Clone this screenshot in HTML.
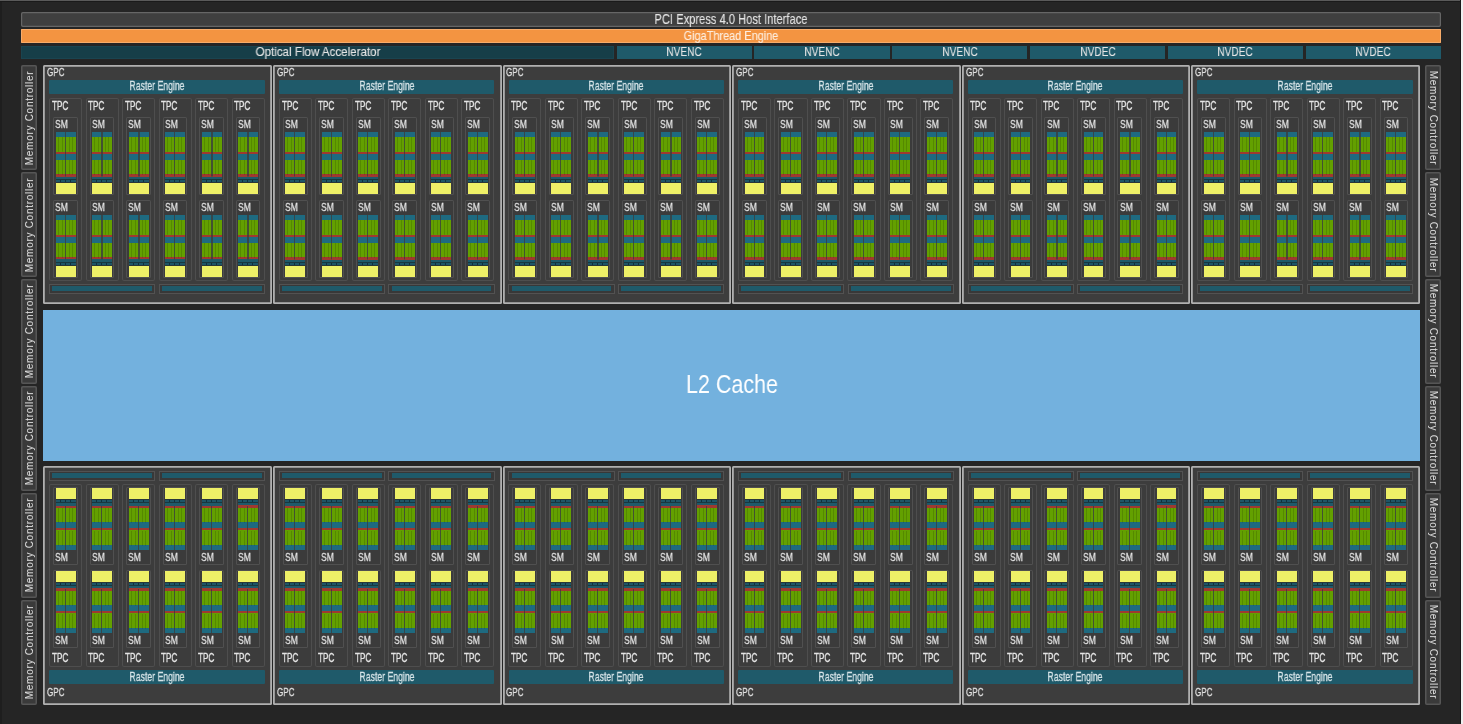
<!DOCTYPE html><html><head><meta charset="utf-8"><style>
html,body{margin:0;padding:0;}
body{width:1463px;height:724px;position:relative;overflow:hidden;background:#252525;font-family:"Liberation Sans", sans-serif;}
#w{position:absolute;left:0;top:0;width:1463px;height:724px;background:#252525;filter:blur(0.45px);}
.r{position:absolute;box-sizing:border-box;}
.t{position:absolute;line-height:1;white-space:nowrap;will-change:transform;}
.mc{text-align:center;color:#dcdcdc;}
.t{-webkit-text-stroke:0.3px currentColor;}
.L{-webkit-text-stroke:0;}
.m{-webkit-text-stroke:0.12px currentColor;}
.s{background:linear-gradient(90deg,transparent 9.3px,rgba(58,62,62,.8) 9.3px,rgba(58,62,62,.8) 10.5px,transparent 10.5px) 0 0/100% 44.5px no-repeat,linear-gradient(90deg,transparent 2.3px,rgba(0,0,0,.14) 2.3px,rgba(0,0,0,.14) 3.1px,transparent 3.1px,transparent 5.8px,rgba(0,0,0,.14) 5.8px,rgba(0,0,0,.14) 6.6px,transparent 6.6px,transparent 12.9px,rgba(0,0,0,.14) 12.9px,rgba(0,0,0,.14) 13.7px,transparent 13.7px,transparent 16.2px,rgba(0,0,0,.14) 16.2px,rgba(0,0,0,.14) 17.0px,transparent 17.0px) 0 5px/100% 14.7px no-repeat,linear-gradient(90deg,transparent 2.3px,rgba(0,0,0,.14) 2.3px,rgba(0,0,0,.14) 3.1px,transparent 3.1px,transparent 5.8px,rgba(0,0,0,.14) 5.8px,rgba(0,0,0,.14) 6.6px,transparent 6.6px,transparent 12.9px,rgba(0,0,0,.14) 12.9px,rgba(0,0,0,.14) 13.7px,transparent 13.7px,transparent 16.2px,rgba(0,0,0,.14) 16.2px,rgba(0,0,0,.14) 17.0px,transparent 17.0px) 0 27.7px/100% 14.7px no-repeat,linear-gradient(90deg,transparent 4.3px,#10303c 4.3px,#10303c 5.3px,transparent 5.3px,transparent 9.3px,#10303c 9.3px,#10303c 10.3px,transparent 10.3px,transparent 14.3px,#10303c 14.3px,#10303c 15.3px,transparent 15.3px) 0 48px/100% 2.3px no-repeat,linear-gradient(180deg,#1e6a80 0,#1e6a80 5px,#63a000 5px,#63a000 19.7px,#a0392f 19.7px,#a0392f 22px,#1e6a80 22px,#1e6a80 27.7px,#63a000 27.7px,#63a000 42.4px,#a0392f 42.4px,#a0392f 44.5px,#1e5a6a 44.5px,#1e5a6a 47.2px,#183840 47.2px,#183840 48px,#1e5566 48px,#1e5566 50.3px,#28363a 50.3px,#28363a 51.1px,#eef067 51.1px,#eef067 62.1px) 0 0/100% 100% no-repeat}
.sf{background:linear-gradient(90deg,transparent 9.3px,rgba(58,62,62,.8) 9.3px,rgba(58,62,62,.8) 10.5px,transparent 10.5px) 0 17.6px/100% 44.5px no-repeat,linear-gradient(90deg,transparent 2.3px,rgba(0,0,0,.14) 2.3px,rgba(0,0,0,.14) 3.1px,transparent 3.1px,transparent 5.8px,rgba(0,0,0,.14) 5.8px,rgba(0,0,0,.14) 6.6px,transparent 6.6px,transparent 12.9px,rgba(0,0,0,.14) 12.9px,rgba(0,0,0,.14) 13.7px,transparent 13.7px,transparent 16.2px,rgba(0,0,0,.14) 16.2px,rgba(0,0,0,.14) 17.0px,transparent 17.0px) 0 42.4px/100% 14.7px no-repeat,linear-gradient(90deg,transparent 2.3px,rgba(0,0,0,.14) 2.3px,rgba(0,0,0,.14) 3.1px,transparent 3.1px,transparent 5.8px,rgba(0,0,0,.14) 5.8px,rgba(0,0,0,.14) 6.6px,transparent 6.6px,transparent 12.9px,rgba(0,0,0,.14) 12.9px,rgba(0,0,0,.14) 13.7px,transparent 13.7px,transparent 16.2px,rgba(0,0,0,.14) 16.2px,rgba(0,0,0,.14) 17.0px,transparent 17.0px) 0 19.7px/100% 14.7px no-repeat,linear-gradient(90deg,transparent 4.3px,#10303c 4.3px,#10303c 5.3px,transparent 5.3px,transparent 9.3px,#10303c 9.3px,#10303c 10.3px,transparent 10.3px,transparent 14.3px,#10303c 14.3px,#10303c 15.3px,transparent 15.3px) 0 11.8px/100% 2.3px no-repeat,linear-gradient(0deg,#1e6a80 0,#1e6a80 5px,#63a000 5px,#63a000 19.7px,#a0392f 19.7px,#a0392f 22px,#1e6a80 22px,#1e6a80 27.7px,#63a000 27.7px,#63a000 42.4px,#a0392f 42.4px,#a0392f 44.5px,#1e5a6a 44.5px,#1e5a6a 47.2px,#183840 47.2px,#183840 48px,#1e5566 48px,#1e5566 50.3px,#28363a 50.3px,#28363a 51.1px,#eef067 51.1px,#eef067 62.1px) 0 0/100% 100% no-repeat}
</style></head><body><div id="w"><div class="r" style="left:0.00px;top:0.00px;width:1463.00px;height:1.30px;background:#5a5a5a"></div><div class="r" style="left:0.00px;top:1.30px;width:1463.00px;height:0.90px;background:#1a1a1a"></div><div class="r" style="left:0.00px;top:2.00px;width:1.60px;height:722.00px;background:#1e1e1e"></div><div class="r" style="left:1459.50px;top:0.00px;width:1.30px;height:724.00px;background:#1a1a1a"></div><div class="r" style="left:1460.80px;top:0.00px;width:2.20px;height:724.00px;background:#f0f0f0"></div><div class="r" style="left:21.00px;top:12.00px;width:1420.00px;height:14.60px;background:#3f3f3f;box-shadow:inset 0 0 0 1.2px #666;border-radius:2px"></div><div class="t m" style="left:531.00px;top:12.00px;width:400px;font-size:14.2px;color:#e4e4e4;text-align:center;transform:scaleX(0.785);">PCI Express 4.0 Host Interface</div><div class="r" style="left:21.00px;top:28.50px;width:1420.00px;height:14.10px;background:#f39441;box-shadow:inset 0 0 0 1px #f8ac6a;border-radius:1px"></div><div class="t m" style="left:531.00px;top:29.00px;width:400px;font-size:13.2px;color:#fdeedf;text-align:center;transform:scaleX(0.828);">GigaThread Engine</div><div class="r" style="left:21.00px;top:45.50px;width:592.50px;height:13.00px;background:#163e48;box-shadow:inset 0 0 0 1px #1a4450"></div><div class="t m" style="left:117.50px;top:46.00px;width:400px;font-size:12.8px;color:#e4e4e4;text-align:center;transform:scaleX(0.905);">Optical Flow Accelerator</div><div class="r" style="left:616.50px;top:45.50px;width:135.40px;height:13.00px;background:#1f5a6a"></div><div class="t m" style="left:484.20px;top:45.00px;width:400px;font-size:13.2px;color:#e4e4e4;text-align:center;transform:scaleX(0.77);">NVENC</div><div class="r" style="left:754.30px;top:45.50px;width:135.40px;height:13.00px;background:#1f5a6a"></div><div class="t m" style="left:622.00px;top:45.00px;width:400px;font-size:13.2px;color:#e4e4e4;text-align:center;transform:scaleX(0.77);">NVENC</div><div class="r" style="left:892.10px;top:45.50px;width:135.40px;height:13.00px;background:#1f5a6a"></div><div class="t m" style="left:759.80px;top:45.00px;width:400px;font-size:13.2px;color:#e4e4e4;text-align:center;transform:scaleX(0.77);">NVENC</div><div class="r" style="left:1029.90px;top:45.50px;width:135.40px;height:13.00px;background:#1f5a6a"></div><div class="t m" style="left:897.60px;top:45.00px;width:400px;font-size:13.2px;color:#e4e4e4;text-align:center;transform:scaleX(0.77);">NVDEC</div><div class="r" style="left:1167.70px;top:45.50px;width:135.40px;height:13.00px;background:#1f5a6a"></div><div class="t m" style="left:1035.40px;top:45.00px;width:400px;font-size:13.2px;color:#e4e4e4;text-align:center;transform:scaleX(0.77);">NVDEC</div><div class="r" style="left:1305.50px;top:45.50px;width:135.40px;height:13.00px;background:#1f5a6a"></div><div class="t m" style="left:1173.20px;top:45.00px;width:400px;font-size:13.2px;color:#e4e4e4;text-align:center;transform:scaleX(0.77);">NVDEC</div><div class="r" style="left:20.90px;top:65.00px;width:16.20px;height:105.20px;background:#3a3a3a;box-shadow:inset 0 0 0 1.5px #565656;border-radius:2px"></div><div class="t mc" style="left:-25.48px;top:112.60px;width:110px;font-size:10px;letter-spacing:0.72px;-webkit-text-stroke:0.05px currentColor;transform:rotate(-90deg)">Memory Controller</div><div class="r" style="left:20.90px;top:171.94px;width:16.20px;height:105.20px;background:#3a3a3a;box-shadow:inset 0 0 0 1.5px #565656;border-radius:2px"></div><div class="t mc" style="left:-25.48px;top:219.54px;width:110px;font-size:10px;letter-spacing:0.72px;-webkit-text-stroke:0.05px currentColor;transform:rotate(-90deg)">Memory Controller</div><div class="r" style="left:20.90px;top:278.88px;width:16.20px;height:105.20px;background:#3a3a3a;box-shadow:inset 0 0 0 1.5px #565656;border-radius:2px"></div><div class="t mc" style="left:-25.48px;top:326.48px;width:110px;font-size:10px;letter-spacing:0.72px;-webkit-text-stroke:0.05px currentColor;transform:rotate(-90deg)">Memory Controller</div><div class="r" style="left:20.90px;top:385.82px;width:16.20px;height:105.20px;background:#3a3a3a;box-shadow:inset 0 0 0 1.5px #565656;border-radius:2px"></div><div class="t mc" style="left:-25.48px;top:433.42px;width:110px;font-size:10px;letter-spacing:0.72px;-webkit-text-stroke:0.05px currentColor;transform:rotate(-90deg)">Memory Controller</div><div class="r" style="left:20.90px;top:492.76px;width:16.20px;height:105.20px;background:#3a3a3a;box-shadow:inset 0 0 0 1.5px #565656;border-radius:2px"></div><div class="t mc" style="left:-25.48px;top:540.36px;width:110px;font-size:10px;letter-spacing:0.72px;-webkit-text-stroke:0.05px currentColor;transform:rotate(-90deg)">Memory Controller</div><div class="r" style="left:20.90px;top:599.70px;width:16.20px;height:105.20px;background:#3a3a3a;box-shadow:inset 0 0 0 1.5px #565656;border-radius:2px"></div><div class="t mc" style="left:-25.48px;top:647.30px;width:110px;font-size:10px;letter-spacing:0.72px;-webkit-text-stroke:0.05px currentColor;transform:rotate(-90deg)">Memory Controller</div><div class="r" style="left:1424.90px;top:65.00px;width:16.20px;height:105.20px;background:#3a3a3a;box-shadow:inset 0 0 0 1.5px #565656;border-radius:2px"></div><div class="t mc" style="left:1378.18px;top:112.60px;width:110px;font-size:10px;letter-spacing:0.72px;-webkit-text-stroke:0.05px currentColor;transform:rotate(90deg)">Memory Controller</div><div class="r" style="left:1424.90px;top:171.94px;width:16.20px;height:105.20px;background:#3a3a3a;box-shadow:inset 0 0 0 1.5px #565656;border-radius:2px"></div><div class="t mc" style="left:1378.18px;top:219.54px;width:110px;font-size:10px;letter-spacing:0.72px;-webkit-text-stroke:0.05px currentColor;transform:rotate(90deg)">Memory Controller</div><div class="r" style="left:1424.90px;top:278.88px;width:16.20px;height:105.20px;background:#3a3a3a;box-shadow:inset 0 0 0 1.5px #565656;border-radius:2px"></div><div class="t mc" style="left:1378.18px;top:326.48px;width:110px;font-size:10px;letter-spacing:0.72px;-webkit-text-stroke:0.05px currentColor;transform:rotate(90deg)">Memory Controller</div><div class="r" style="left:1424.90px;top:385.82px;width:16.20px;height:105.20px;background:#3a3a3a;box-shadow:inset 0 0 0 1.5px #565656;border-radius:2px"></div><div class="t mc" style="left:1378.18px;top:433.42px;width:110px;font-size:10px;letter-spacing:0.72px;-webkit-text-stroke:0.05px currentColor;transform:rotate(90deg)">Memory Controller</div><div class="r" style="left:1424.90px;top:492.76px;width:16.20px;height:105.20px;background:#3a3a3a;box-shadow:inset 0 0 0 1.5px #565656;border-radius:2px"></div><div class="t mc" style="left:1378.18px;top:540.36px;width:110px;font-size:10px;letter-spacing:0.72px;-webkit-text-stroke:0.05px currentColor;transform:rotate(90deg)">Memory Controller</div><div class="r" style="left:1424.90px;top:599.70px;width:16.20px;height:105.20px;background:#3a3a3a;box-shadow:inset 0 0 0 1.5px #565656;border-radius:2px"></div><div class="t mc" style="left:1378.18px;top:647.30px;width:110px;font-size:10px;letter-spacing:0.72px;-webkit-text-stroke:0.05px currentColor;transform:rotate(90deg)">Memory Controller</div><div class="r" style="left:43.30px;top:309.60px;width:1376.80px;height:151.40px;background:#73b1de"></div><div class="t L" style="left:531.70px;top:371.00px;width:400px;font-size:26px;color:#ffffff;text-align:center;transform:scaleX(0.825);">L2 Cache</div><div class="r" style="left:43.40px;top:64.60px;width:228.50px;height:239.40px;background:#3d3d3d;box-shadow:inset 0 0 0 1.8px #b0b0b0;border-radius:1.5px"></div><div class="t" style="left:47.20px;top:67.00px;font-size:10.9px;color:#e4e4e4;transform-origin:0 0;transform:scaleX(0.74);">GPC</div><div class="r" style="left:49.40px;top:79.60px;width:215.30px;height:14.20px;background:#1f5a6a;border-radius:1px"></div><div class="t" style="left:-42.95px;top:81.00px;width:400px;font-size:11.9px;color:#d6e4e8;text-align:center;transform:scaleX(0.73);">Raster Engine</div><div class="r" style="left:49.10px;top:283.70px;width:106.30px;height:10.10px;background:#383838;box-shadow:inset 0 0 0 1px #525252"></div><div class="r" style="left:52.30px;top:286.20px;width:99.90px;height:4.90px;background:#1f5a6a"></div><div class="r" style="left:158.70px;top:283.70px;width:106.30px;height:10.10px;background:#383838;box-shadow:inset 0 0 0 1px #525252"></div><div class="r" style="left:161.90px;top:286.20px;width:99.90px;height:4.90px;background:#1f5a6a"></div><div class="r" style="left:49.20px;top:98.00px;width:33.10px;height:183.20px;background:#3c3c3c;box-shadow:inset 0 0 0 1px #4e4e4e;border-radius:2px"></div><div class="t" style="left:52.00px;top:99.60px;font-size:12.4px;color:#e4e4e4;transform-origin:0 0;transform:scaleX(0.66);">TPC</div><div class="r" style="left:53.10px;top:117.00px;width:24.90px;height:78.40px;background:#3b3b3b;box-shadow:inset 0 0 0 1px #505050;border-radius:1.5px"></div><div class="t" style="left:55.20px;top:118.00px;font-size:11.6px;color:#e4e4e4;transform-origin:0 0;transform:scaleX(0.74);">SM</div><div class="r s" style="left:55.70px;top:131.90px;width:19.90px;height:62.10px;"></div><div class="r" style="left:53.10px;top:200.00px;width:24.90px;height:78.40px;background:#3b3b3b;box-shadow:inset 0 0 0 1px #505050;border-radius:1.5px"></div><div class="t" style="left:55.20px;top:201.00px;font-size:11.6px;color:#e4e4e4;transform-origin:0 0;transform:scaleX(0.74);">SM</div><div class="r s" style="left:55.70px;top:214.90px;width:19.90px;height:62.10px;"></div><div class="r" style="left:85.68px;top:98.00px;width:33.10px;height:183.20px;background:#3c3c3c;box-shadow:inset 0 0 0 1px #4e4e4e;border-radius:2px"></div><div class="t" style="left:88.48px;top:99.60px;font-size:12.4px;color:#e4e4e4;transform-origin:0 0;transform:scaleX(0.66);">TPC</div><div class="r" style="left:89.58px;top:117.00px;width:24.90px;height:78.40px;background:#3b3b3b;box-shadow:inset 0 0 0 1px #505050;border-radius:1.5px"></div><div class="t" style="left:91.68px;top:118.00px;font-size:11.6px;color:#e4e4e4;transform-origin:0 0;transform:scaleX(0.74);">SM</div><div class="r s" style="left:92.18px;top:131.90px;width:19.90px;height:62.10px;"></div><div class="r" style="left:89.58px;top:200.00px;width:24.90px;height:78.40px;background:#3b3b3b;box-shadow:inset 0 0 0 1px #505050;border-radius:1.5px"></div><div class="t" style="left:91.68px;top:201.00px;font-size:11.6px;color:#e4e4e4;transform-origin:0 0;transform:scaleX(0.74);">SM</div><div class="r s" style="left:92.18px;top:214.90px;width:19.90px;height:62.10px;"></div><div class="r" style="left:122.16px;top:98.00px;width:33.10px;height:183.20px;background:#3c3c3c;box-shadow:inset 0 0 0 1px #4e4e4e;border-radius:2px"></div><div class="t" style="left:124.96px;top:99.60px;font-size:12.4px;color:#e4e4e4;transform-origin:0 0;transform:scaleX(0.66);">TPC</div><div class="r" style="left:126.06px;top:117.00px;width:24.90px;height:78.40px;background:#3b3b3b;box-shadow:inset 0 0 0 1px #505050;border-radius:1.5px"></div><div class="t" style="left:128.16px;top:118.00px;font-size:11.6px;color:#e4e4e4;transform-origin:0 0;transform:scaleX(0.74);">SM</div><div class="r s" style="left:128.66px;top:131.90px;width:19.90px;height:62.10px;"></div><div class="r" style="left:126.06px;top:200.00px;width:24.90px;height:78.40px;background:#3b3b3b;box-shadow:inset 0 0 0 1px #505050;border-radius:1.5px"></div><div class="t" style="left:128.16px;top:201.00px;font-size:11.6px;color:#e4e4e4;transform-origin:0 0;transform:scaleX(0.74);">SM</div><div class="r s" style="left:128.66px;top:214.90px;width:19.90px;height:62.10px;"></div><div class="r" style="left:158.64px;top:98.00px;width:33.10px;height:183.20px;background:#3c3c3c;box-shadow:inset 0 0 0 1px #4e4e4e;border-radius:2px"></div><div class="t" style="left:161.44px;top:99.60px;font-size:12.4px;color:#e4e4e4;transform-origin:0 0;transform:scaleX(0.66);">TPC</div><div class="r" style="left:162.54px;top:117.00px;width:24.90px;height:78.40px;background:#3b3b3b;box-shadow:inset 0 0 0 1px #505050;border-radius:1.5px"></div><div class="t" style="left:164.64px;top:118.00px;font-size:11.6px;color:#e4e4e4;transform-origin:0 0;transform:scaleX(0.74);">SM</div><div class="r s" style="left:165.14px;top:131.90px;width:19.90px;height:62.10px;"></div><div class="r" style="left:162.54px;top:200.00px;width:24.90px;height:78.40px;background:#3b3b3b;box-shadow:inset 0 0 0 1px #505050;border-radius:1.5px"></div><div class="t" style="left:164.64px;top:201.00px;font-size:11.6px;color:#e4e4e4;transform-origin:0 0;transform:scaleX(0.74);">SM</div><div class="r s" style="left:165.14px;top:214.90px;width:19.90px;height:62.10px;"></div><div class="r" style="left:195.12px;top:98.00px;width:33.10px;height:183.20px;background:#3c3c3c;box-shadow:inset 0 0 0 1px #4e4e4e;border-radius:2px"></div><div class="t" style="left:197.92px;top:99.60px;font-size:12.4px;color:#e4e4e4;transform-origin:0 0;transform:scaleX(0.66);">TPC</div><div class="r" style="left:199.02px;top:117.00px;width:24.90px;height:78.40px;background:#3b3b3b;box-shadow:inset 0 0 0 1px #505050;border-radius:1.5px"></div><div class="t" style="left:201.12px;top:118.00px;font-size:11.6px;color:#e4e4e4;transform-origin:0 0;transform:scaleX(0.74);">SM</div><div class="r s" style="left:201.62px;top:131.90px;width:19.90px;height:62.10px;"></div><div class="r" style="left:199.02px;top:200.00px;width:24.90px;height:78.40px;background:#3b3b3b;box-shadow:inset 0 0 0 1px #505050;border-radius:1.5px"></div><div class="t" style="left:201.12px;top:201.00px;font-size:11.6px;color:#e4e4e4;transform-origin:0 0;transform:scaleX(0.74);">SM</div><div class="r s" style="left:201.62px;top:214.90px;width:19.90px;height:62.10px;"></div><div class="r" style="left:231.60px;top:98.00px;width:33.10px;height:183.20px;background:#3c3c3c;box-shadow:inset 0 0 0 1px #4e4e4e;border-radius:2px"></div><div class="t" style="left:234.40px;top:99.60px;font-size:12.4px;color:#e4e4e4;transform-origin:0 0;transform:scaleX(0.66);">TPC</div><div class="r" style="left:235.50px;top:117.00px;width:24.90px;height:78.40px;background:#3b3b3b;box-shadow:inset 0 0 0 1px #505050;border-radius:1.5px"></div><div class="t" style="left:237.60px;top:118.00px;font-size:11.6px;color:#e4e4e4;transform-origin:0 0;transform:scaleX(0.74);">SM</div><div class="r s" style="left:238.10px;top:131.90px;width:19.90px;height:62.10px;"></div><div class="r" style="left:235.50px;top:200.00px;width:24.90px;height:78.40px;background:#3b3b3b;box-shadow:inset 0 0 0 1px #505050;border-radius:1.5px"></div><div class="t" style="left:237.60px;top:201.00px;font-size:11.6px;color:#e4e4e4;transform-origin:0 0;transform:scaleX(0.74);">SM</div><div class="r s" style="left:238.10px;top:214.90px;width:19.90px;height:62.10px;"></div><div class="r" style="left:43.40px;top:466.30px;width:228.50px;height:238.40px;background:#3d3d3d;box-shadow:inset 0 0 0 1.8px #b0b0b0;border-radius:1.5px"></div><div class="t" style="left:47.20px;top:687.00px;font-size:10.9px;color:#e4e4e4;transform-origin:0 0;transform:scaleX(0.74);">GPC</div><div class="r" style="left:49.40px;top:669.80px;width:215.30px;height:14.20px;background:#1f5a6a;border-radius:1px"></div><div class="t" style="left:-42.95px;top:671.50px;width:400px;font-size:11.9px;color:#d6e4e8;text-align:center;transform:scaleX(0.73);">Raster Engine</div><div class="r" style="left:49.10px;top:470.60px;width:106.30px;height:10.10px;background:#383838;box-shadow:inset 0 0 0 1px #525252"></div><div class="r" style="left:52.30px;top:473.30px;width:99.90px;height:4.90px;background:#1f5a6a"></div><div class="r" style="left:158.70px;top:470.60px;width:106.30px;height:10.10px;background:#383838;box-shadow:inset 0 0 0 1px #525252"></div><div class="r" style="left:161.90px;top:473.30px;width:99.90px;height:4.90px;background:#1f5a6a"></div><div class="r" style="left:49.20px;top:484.00px;width:33.10px;height:183.20px;background:#3c3c3c;box-shadow:inset 0 0 0 1px #4e4e4e;border-radius:2px"></div><div class="t" style="left:52.00px;top:652.00px;font-size:12.4px;color:#e4e4e4;transform-origin:0 0;transform:scaleX(0.66);">TPC</div><div class="r" style="left:53.10px;top:569.80px;width:24.90px;height:78.40px;background:#3b3b3b;box-shadow:inset 0 0 0 1px #505050;border-radius:1.5px"></div><div class="t" style="left:55.20px;top:633.50px;font-size:11.6px;color:#e4e4e4;transform-origin:0 0;transform:scaleX(0.74);">SM</div><div class="r sf" style="left:55.70px;top:571.20px;width:19.90px;height:62.10px;"></div><div class="r" style="left:53.10px;top:486.80px;width:24.90px;height:78.40px;background:#3b3b3b;box-shadow:inset 0 0 0 1px #505050;border-radius:1.5px"></div><div class="t" style="left:55.20px;top:550.50px;font-size:11.6px;color:#e4e4e4;transform-origin:0 0;transform:scaleX(0.74);">SM</div><div class="r sf" style="left:55.70px;top:488.20px;width:19.90px;height:62.10px;"></div><div class="r" style="left:85.68px;top:484.00px;width:33.10px;height:183.20px;background:#3c3c3c;box-shadow:inset 0 0 0 1px #4e4e4e;border-radius:2px"></div><div class="t" style="left:88.48px;top:652.00px;font-size:12.4px;color:#e4e4e4;transform-origin:0 0;transform:scaleX(0.66);">TPC</div><div class="r" style="left:89.58px;top:569.80px;width:24.90px;height:78.40px;background:#3b3b3b;box-shadow:inset 0 0 0 1px #505050;border-radius:1.5px"></div><div class="t" style="left:91.68px;top:633.50px;font-size:11.6px;color:#e4e4e4;transform-origin:0 0;transform:scaleX(0.74);">SM</div><div class="r sf" style="left:92.18px;top:571.20px;width:19.90px;height:62.10px;"></div><div class="r" style="left:89.58px;top:486.80px;width:24.90px;height:78.40px;background:#3b3b3b;box-shadow:inset 0 0 0 1px #505050;border-radius:1.5px"></div><div class="t" style="left:91.68px;top:550.50px;font-size:11.6px;color:#e4e4e4;transform-origin:0 0;transform:scaleX(0.74);">SM</div><div class="r sf" style="left:92.18px;top:488.20px;width:19.90px;height:62.10px;"></div><div class="r" style="left:122.16px;top:484.00px;width:33.10px;height:183.20px;background:#3c3c3c;box-shadow:inset 0 0 0 1px #4e4e4e;border-radius:2px"></div><div class="t" style="left:124.96px;top:652.00px;font-size:12.4px;color:#e4e4e4;transform-origin:0 0;transform:scaleX(0.66);">TPC</div><div class="r" style="left:126.06px;top:569.80px;width:24.90px;height:78.40px;background:#3b3b3b;box-shadow:inset 0 0 0 1px #505050;border-radius:1.5px"></div><div class="t" style="left:128.16px;top:633.50px;font-size:11.6px;color:#e4e4e4;transform-origin:0 0;transform:scaleX(0.74);">SM</div><div class="r sf" style="left:128.66px;top:571.20px;width:19.90px;height:62.10px;"></div><div class="r" style="left:126.06px;top:486.80px;width:24.90px;height:78.40px;background:#3b3b3b;box-shadow:inset 0 0 0 1px #505050;border-radius:1.5px"></div><div class="t" style="left:128.16px;top:550.50px;font-size:11.6px;color:#e4e4e4;transform-origin:0 0;transform:scaleX(0.74);">SM</div><div class="r sf" style="left:128.66px;top:488.20px;width:19.90px;height:62.10px;"></div><div class="r" style="left:158.64px;top:484.00px;width:33.10px;height:183.20px;background:#3c3c3c;box-shadow:inset 0 0 0 1px #4e4e4e;border-radius:2px"></div><div class="t" style="left:161.44px;top:652.00px;font-size:12.4px;color:#e4e4e4;transform-origin:0 0;transform:scaleX(0.66);">TPC</div><div class="r" style="left:162.54px;top:569.80px;width:24.90px;height:78.40px;background:#3b3b3b;box-shadow:inset 0 0 0 1px #505050;border-radius:1.5px"></div><div class="t" style="left:164.64px;top:633.50px;font-size:11.6px;color:#e4e4e4;transform-origin:0 0;transform:scaleX(0.74);">SM</div><div class="r sf" style="left:165.14px;top:571.20px;width:19.90px;height:62.10px;"></div><div class="r" style="left:162.54px;top:486.80px;width:24.90px;height:78.40px;background:#3b3b3b;box-shadow:inset 0 0 0 1px #505050;border-radius:1.5px"></div><div class="t" style="left:164.64px;top:550.50px;font-size:11.6px;color:#e4e4e4;transform-origin:0 0;transform:scaleX(0.74);">SM</div><div class="r sf" style="left:165.14px;top:488.20px;width:19.90px;height:62.10px;"></div><div class="r" style="left:195.12px;top:484.00px;width:33.10px;height:183.20px;background:#3c3c3c;box-shadow:inset 0 0 0 1px #4e4e4e;border-radius:2px"></div><div class="t" style="left:197.92px;top:652.00px;font-size:12.4px;color:#e4e4e4;transform-origin:0 0;transform:scaleX(0.66);">TPC</div><div class="r" style="left:199.02px;top:569.80px;width:24.90px;height:78.40px;background:#3b3b3b;box-shadow:inset 0 0 0 1px #505050;border-radius:1.5px"></div><div class="t" style="left:201.12px;top:633.50px;font-size:11.6px;color:#e4e4e4;transform-origin:0 0;transform:scaleX(0.74);">SM</div><div class="r sf" style="left:201.62px;top:571.20px;width:19.90px;height:62.10px;"></div><div class="r" style="left:199.02px;top:486.80px;width:24.90px;height:78.40px;background:#3b3b3b;box-shadow:inset 0 0 0 1px #505050;border-radius:1.5px"></div><div class="t" style="left:201.12px;top:550.50px;font-size:11.6px;color:#e4e4e4;transform-origin:0 0;transform:scaleX(0.74);">SM</div><div class="r sf" style="left:201.62px;top:488.20px;width:19.90px;height:62.10px;"></div><div class="r" style="left:231.60px;top:484.00px;width:33.10px;height:183.20px;background:#3c3c3c;box-shadow:inset 0 0 0 1px #4e4e4e;border-radius:2px"></div><div class="t" style="left:234.40px;top:652.00px;font-size:12.4px;color:#e4e4e4;transform-origin:0 0;transform:scaleX(0.66);">TPC</div><div class="r" style="left:235.50px;top:569.80px;width:24.90px;height:78.40px;background:#3b3b3b;box-shadow:inset 0 0 0 1px #505050;border-radius:1.5px"></div><div class="t" style="left:237.60px;top:633.50px;font-size:11.6px;color:#e4e4e4;transform-origin:0 0;transform:scaleX(0.74);">SM</div><div class="r sf" style="left:238.10px;top:571.20px;width:19.90px;height:62.10px;"></div><div class="r" style="left:235.50px;top:486.80px;width:24.90px;height:78.40px;background:#3b3b3b;box-shadow:inset 0 0 0 1px #505050;border-radius:1.5px"></div><div class="t" style="left:237.60px;top:550.50px;font-size:11.6px;color:#e4e4e4;transform-origin:0 0;transform:scaleX(0.74);">SM</div><div class="r sf" style="left:238.10px;top:488.20px;width:19.90px;height:62.10px;"></div><div class="r" style="left:273.00px;top:64.60px;width:228.50px;height:239.40px;background:#3d3d3d;box-shadow:inset 0 0 0 1.8px #b0b0b0;border-radius:1.5px"></div><div class="t" style="left:276.80px;top:67.00px;font-size:10.9px;color:#e4e4e4;transform-origin:0 0;transform:scaleX(0.74);">GPC</div><div class="r" style="left:279.00px;top:79.60px;width:215.30px;height:14.20px;background:#1f5a6a;border-radius:1px"></div><div class="t" style="left:186.65px;top:81.00px;width:400px;font-size:11.9px;color:#d6e4e8;text-align:center;transform:scaleX(0.73);">Raster Engine</div><div class="r" style="left:278.70px;top:283.70px;width:106.30px;height:10.10px;background:#383838;box-shadow:inset 0 0 0 1px #525252"></div><div class="r" style="left:281.90px;top:286.20px;width:99.90px;height:4.90px;background:#1f5a6a"></div><div class="r" style="left:388.30px;top:283.70px;width:106.30px;height:10.10px;background:#383838;box-shadow:inset 0 0 0 1px #525252"></div><div class="r" style="left:391.50px;top:286.20px;width:99.90px;height:4.90px;background:#1f5a6a"></div><div class="r" style="left:278.80px;top:98.00px;width:33.10px;height:183.20px;background:#3c3c3c;box-shadow:inset 0 0 0 1px #4e4e4e;border-radius:2px"></div><div class="t" style="left:281.60px;top:99.60px;font-size:12.4px;color:#e4e4e4;transform-origin:0 0;transform:scaleX(0.66);">TPC</div><div class="r" style="left:282.70px;top:117.00px;width:24.90px;height:78.40px;background:#3b3b3b;box-shadow:inset 0 0 0 1px #505050;border-radius:1.5px"></div><div class="t" style="left:284.80px;top:118.00px;font-size:11.6px;color:#e4e4e4;transform-origin:0 0;transform:scaleX(0.74);">SM</div><div class="r s" style="left:285.30px;top:131.90px;width:19.90px;height:62.10px;"></div><div class="r" style="left:282.70px;top:200.00px;width:24.90px;height:78.40px;background:#3b3b3b;box-shadow:inset 0 0 0 1px #505050;border-radius:1.5px"></div><div class="t" style="left:284.80px;top:201.00px;font-size:11.6px;color:#e4e4e4;transform-origin:0 0;transform:scaleX(0.74);">SM</div><div class="r s" style="left:285.30px;top:214.90px;width:19.90px;height:62.10px;"></div><div class="r" style="left:315.28px;top:98.00px;width:33.10px;height:183.20px;background:#3c3c3c;box-shadow:inset 0 0 0 1px #4e4e4e;border-radius:2px"></div><div class="t" style="left:318.08px;top:99.60px;font-size:12.4px;color:#e4e4e4;transform-origin:0 0;transform:scaleX(0.66);">TPC</div><div class="r" style="left:319.18px;top:117.00px;width:24.90px;height:78.40px;background:#3b3b3b;box-shadow:inset 0 0 0 1px #505050;border-radius:1.5px"></div><div class="t" style="left:321.28px;top:118.00px;font-size:11.6px;color:#e4e4e4;transform-origin:0 0;transform:scaleX(0.74);">SM</div><div class="r s" style="left:321.78px;top:131.90px;width:19.90px;height:62.10px;"></div><div class="r" style="left:319.18px;top:200.00px;width:24.90px;height:78.40px;background:#3b3b3b;box-shadow:inset 0 0 0 1px #505050;border-radius:1.5px"></div><div class="t" style="left:321.28px;top:201.00px;font-size:11.6px;color:#e4e4e4;transform-origin:0 0;transform:scaleX(0.74);">SM</div><div class="r s" style="left:321.78px;top:214.90px;width:19.90px;height:62.10px;"></div><div class="r" style="left:351.76px;top:98.00px;width:33.10px;height:183.20px;background:#3c3c3c;box-shadow:inset 0 0 0 1px #4e4e4e;border-radius:2px"></div><div class="t" style="left:354.56px;top:99.60px;font-size:12.4px;color:#e4e4e4;transform-origin:0 0;transform:scaleX(0.66);">TPC</div><div class="r" style="left:355.66px;top:117.00px;width:24.90px;height:78.40px;background:#3b3b3b;box-shadow:inset 0 0 0 1px #505050;border-radius:1.5px"></div><div class="t" style="left:357.76px;top:118.00px;font-size:11.6px;color:#e4e4e4;transform-origin:0 0;transform:scaleX(0.74);">SM</div><div class="r s" style="left:358.26px;top:131.90px;width:19.90px;height:62.10px;"></div><div class="r" style="left:355.66px;top:200.00px;width:24.90px;height:78.40px;background:#3b3b3b;box-shadow:inset 0 0 0 1px #505050;border-radius:1.5px"></div><div class="t" style="left:357.76px;top:201.00px;font-size:11.6px;color:#e4e4e4;transform-origin:0 0;transform:scaleX(0.74);">SM</div><div class="r s" style="left:358.26px;top:214.90px;width:19.90px;height:62.10px;"></div><div class="r" style="left:388.24px;top:98.00px;width:33.10px;height:183.20px;background:#3c3c3c;box-shadow:inset 0 0 0 1px #4e4e4e;border-radius:2px"></div><div class="t" style="left:391.04px;top:99.60px;font-size:12.4px;color:#e4e4e4;transform-origin:0 0;transform:scaleX(0.66);">TPC</div><div class="r" style="left:392.14px;top:117.00px;width:24.90px;height:78.40px;background:#3b3b3b;box-shadow:inset 0 0 0 1px #505050;border-radius:1.5px"></div><div class="t" style="left:394.24px;top:118.00px;font-size:11.6px;color:#e4e4e4;transform-origin:0 0;transform:scaleX(0.74);">SM</div><div class="r s" style="left:394.74px;top:131.90px;width:19.90px;height:62.10px;"></div><div class="r" style="left:392.14px;top:200.00px;width:24.90px;height:78.40px;background:#3b3b3b;box-shadow:inset 0 0 0 1px #505050;border-radius:1.5px"></div><div class="t" style="left:394.24px;top:201.00px;font-size:11.6px;color:#e4e4e4;transform-origin:0 0;transform:scaleX(0.74);">SM</div><div class="r s" style="left:394.74px;top:214.90px;width:19.90px;height:62.10px;"></div><div class="r" style="left:424.72px;top:98.00px;width:33.10px;height:183.20px;background:#3c3c3c;box-shadow:inset 0 0 0 1px #4e4e4e;border-radius:2px"></div><div class="t" style="left:427.52px;top:99.60px;font-size:12.4px;color:#e4e4e4;transform-origin:0 0;transform:scaleX(0.66);">TPC</div><div class="r" style="left:428.62px;top:117.00px;width:24.90px;height:78.40px;background:#3b3b3b;box-shadow:inset 0 0 0 1px #505050;border-radius:1.5px"></div><div class="t" style="left:430.72px;top:118.00px;font-size:11.6px;color:#e4e4e4;transform-origin:0 0;transform:scaleX(0.74);">SM</div><div class="r s" style="left:431.22px;top:131.90px;width:19.90px;height:62.10px;"></div><div class="r" style="left:428.62px;top:200.00px;width:24.90px;height:78.40px;background:#3b3b3b;box-shadow:inset 0 0 0 1px #505050;border-radius:1.5px"></div><div class="t" style="left:430.72px;top:201.00px;font-size:11.6px;color:#e4e4e4;transform-origin:0 0;transform:scaleX(0.74);">SM</div><div class="r s" style="left:431.22px;top:214.90px;width:19.90px;height:62.10px;"></div><div class="r" style="left:461.20px;top:98.00px;width:33.10px;height:183.20px;background:#3c3c3c;box-shadow:inset 0 0 0 1px #4e4e4e;border-radius:2px"></div><div class="t" style="left:464.00px;top:99.60px;font-size:12.4px;color:#e4e4e4;transform-origin:0 0;transform:scaleX(0.66);">TPC</div><div class="r" style="left:465.10px;top:117.00px;width:24.90px;height:78.40px;background:#3b3b3b;box-shadow:inset 0 0 0 1px #505050;border-radius:1.5px"></div><div class="t" style="left:467.20px;top:118.00px;font-size:11.6px;color:#e4e4e4;transform-origin:0 0;transform:scaleX(0.74);">SM</div><div class="r s" style="left:467.70px;top:131.90px;width:19.90px;height:62.10px;"></div><div class="r" style="left:465.10px;top:200.00px;width:24.90px;height:78.40px;background:#3b3b3b;box-shadow:inset 0 0 0 1px #505050;border-radius:1.5px"></div><div class="t" style="left:467.20px;top:201.00px;font-size:11.6px;color:#e4e4e4;transform-origin:0 0;transform:scaleX(0.74);">SM</div><div class="r s" style="left:467.70px;top:214.90px;width:19.90px;height:62.10px;"></div><div class="r" style="left:273.00px;top:466.30px;width:228.50px;height:238.40px;background:#3d3d3d;box-shadow:inset 0 0 0 1.8px #b0b0b0;border-radius:1.5px"></div><div class="t" style="left:276.80px;top:687.00px;font-size:10.9px;color:#e4e4e4;transform-origin:0 0;transform:scaleX(0.74);">GPC</div><div class="r" style="left:279.00px;top:669.80px;width:215.30px;height:14.20px;background:#1f5a6a;border-radius:1px"></div><div class="t" style="left:186.65px;top:671.50px;width:400px;font-size:11.9px;color:#d6e4e8;text-align:center;transform:scaleX(0.73);">Raster Engine</div><div class="r" style="left:278.70px;top:470.60px;width:106.30px;height:10.10px;background:#383838;box-shadow:inset 0 0 0 1px #525252"></div><div class="r" style="left:281.90px;top:473.30px;width:99.90px;height:4.90px;background:#1f5a6a"></div><div class="r" style="left:388.30px;top:470.60px;width:106.30px;height:10.10px;background:#383838;box-shadow:inset 0 0 0 1px #525252"></div><div class="r" style="left:391.50px;top:473.30px;width:99.90px;height:4.90px;background:#1f5a6a"></div><div class="r" style="left:278.80px;top:484.00px;width:33.10px;height:183.20px;background:#3c3c3c;box-shadow:inset 0 0 0 1px #4e4e4e;border-radius:2px"></div><div class="t" style="left:281.60px;top:652.00px;font-size:12.4px;color:#e4e4e4;transform-origin:0 0;transform:scaleX(0.66);">TPC</div><div class="r" style="left:282.70px;top:569.80px;width:24.90px;height:78.40px;background:#3b3b3b;box-shadow:inset 0 0 0 1px #505050;border-radius:1.5px"></div><div class="t" style="left:284.80px;top:633.50px;font-size:11.6px;color:#e4e4e4;transform-origin:0 0;transform:scaleX(0.74);">SM</div><div class="r sf" style="left:285.30px;top:571.20px;width:19.90px;height:62.10px;"></div><div class="r" style="left:282.70px;top:486.80px;width:24.90px;height:78.40px;background:#3b3b3b;box-shadow:inset 0 0 0 1px #505050;border-radius:1.5px"></div><div class="t" style="left:284.80px;top:550.50px;font-size:11.6px;color:#e4e4e4;transform-origin:0 0;transform:scaleX(0.74);">SM</div><div class="r sf" style="left:285.30px;top:488.20px;width:19.90px;height:62.10px;"></div><div class="r" style="left:315.28px;top:484.00px;width:33.10px;height:183.20px;background:#3c3c3c;box-shadow:inset 0 0 0 1px #4e4e4e;border-radius:2px"></div><div class="t" style="left:318.08px;top:652.00px;font-size:12.4px;color:#e4e4e4;transform-origin:0 0;transform:scaleX(0.66);">TPC</div><div class="r" style="left:319.18px;top:569.80px;width:24.90px;height:78.40px;background:#3b3b3b;box-shadow:inset 0 0 0 1px #505050;border-radius:1.5px"></div><div class="t" style="left:321.28px;top:633.50px;font-size:11.6px;color:#e4e4e4;transform-origin:0 0;transform:scaleX(0.74);">SM</div><div class="r sf" style="left:321.78px;top:571.20px;width:19.90px;height:62.10px;"></div><div class="r" style="left:319.18px;top:486.80px;width:24.90px;height:78.40px;background:#3b3b3b;box-shadow:inset 0 0 0 1px #505050;border-radius:1.5px"></div><div class="t" style="left:321.28px;top:550.50px;font-size:11.6px;color:#e4e4e4;transform-origin:0 0;transform:scaleX(0.74);">SM</div><div class="r sf" style="left:321.78px;top:488.20px;width:19.90px;height:62.10px;"></div><div class="r" style="left:351.76px;top:484.00px;width:33.10px;height:183.20px;background:#3c3c3c;box-shadow:inset 0 0 0 1px #4e4e4e;border-radius:2px"></div><div class="t" style="left:354.56px;top:652.00px;font-size:12.4px;color:#e4e4e4;transform-origin:0 0;transform:scaleX(0.66);">TPC</div><div class="r" style="left:355.66px;top:569.80px;width:24.90px;height:78.40px;background:#3b3b3b;box-shadow:inset 0 0 0 1px #505050;border-radius:1.5px"></div><div class="t" style="left:357.76px;top:633.50px;font-size:11.6px;color:#e4e4e4;transform-origin:0 0;transform:scaleX(0.74);">SM</div><div class="r sf" style="left:358.26px;top:571.20px;width:19.90px;height:62.10px;"></div><div class="r" style="left:355.66px;top:486.80px;width:24.90px;height:78.40px;background:#3b3b3b;box-shadow:inset 0 0 0 1px #505050;border-radius:1.5px"></div><div class="t" style="left:357.76px;top:550.50px;font-size:11.6px;color:#e4e4e4;transform-origin:0 0;transform:scaleX(0.74);">SM</div><div class="r sf" style="left:358.26px;top:488.20px;width:19.90px;height:62.10px;"></div><div class="r" style="left:388.24px;top:484.00px;width:33.10px;height:183.20px;background:#3c3c3c;box-shadow:inset 0 0 0 1px #4e4e4e;border-radius:2px"></div><div class="t" style="left:391.04px;top:652.00px;font-size:12.4px;color:#e4e4e4;transform-origin:0 0;transform:scaleX(0.66);">TPC</div><div class="r" style="left:392.14px;top:569.80px;width:24.90px;height:78.40px;background:#3b3b3b;box-shadow:inset 0 0 0 1px #505050;border-radius:1.5px"></div><div class="t" style="left:394.24px;top:633.50px;font-size:11.6px;color:#e4e4e4;transform-origin:0 0;transform:scaleX(0.74);">SM</div><div class="r sf" style="left:394.74px;top:571.20px;width:19.90px;height:62.10px;"></div><div class="r" style="left:392.14px;top:486.80px;width:24.90px;height:78.40px;background:#3b3b3b;box-shadow:inset 0 0 0 1px #505050;border-radius:1.5px"></div><div class="t" style="left:394.24px;top:550.50px;font-size:11.6px;color:#e4e4e4;transform-origin:0 0;transform:scaleX(0.74);">SM</div><div class="r sf" style="left:394.74px;top:488.20px;width:19.90px;height:62.10px;"></div><div class="r" style="left:424.72px;top:484.00px;width:33.10px;height:183.20px;background:#3c3c3c;box-shadow:inset 0 0 0 1px #4e4e4e;border-radius:2px"></div><div class="t" style="left:427.52px;top:652.00px;font-size:12.4px;color:#e4e4e4;transform-origin:0 0;transform:scaleX(0.66);">TPC</div><div class="r" style="left:428.62px;top:569.80px;width:24.90px;height:78.40px;background:#3b3b3b;box-shadow:inset 0 0 0 1px #505050;border-radius:1.5px"></div><div class="t" style="left:430.72px;top:633.50px;font-size:11.6px;color:#e4e4e4;transform-origin:0 0;transform:scaleX(0.74);">SM</div><div class="r sf" style="left:431.22px;top:571.20px;width:19.90px;height:62.10px;"></div><div class="r" style="left:428.62px;top:486.80px;width:24.90px;height:78.40px;background:#3b3b3b;box-shadow:inset 0 0 0 1px #505050;border-radius:1.5px"></div><div class="t" style="left:430.72px;top:550.50px;font-size:11.6px;color:#e4e4e4;transform-origin:0 0;transform:scaleX(0.74);">SM</div><div class="r sf" style="left:431.22px;top:488.20px;width:19.90px;height:62.10px;"></div><div class="r" style="left:461.20px;top:484.00px;width:33.10px;height:183.20px;background:#3c3c3c;box-shadow:inset 0 0 0 1px #4e4e4e;border-radius:2px"></div><div class="t" style="left:464.00px;top:652.00px;font-size:12.4px;color:#e4e4e4;transform-origin:0 0;transform:scaleX(0.66);">TPC</div><div class="r" style="left:465.10px;top:569.80px;width:24.90px;height:78.40px;background:#3b3b3b;box-shadow:inset 0 0 0 1px #505050;border-radius:1.5px"></div><div class="t" style="left:467.20px;top:633.50px;font-size:11.6px;color:#e4e4e4;transform-origin:0 0;transform:scaleX(0.74);">SM</div><div class="r sf" style="left:467.70px;top:571.20px;width:19.90px;height:62.10px;"></div><div class="r" style="left:465.10px;top:486.80px;width:24.90px;height:78.40px;background:#3b3b3b;box-shadow:inset 0 0 0 1px #505050;border-radius:1.5px"></div><div class="t" style="left:467.20px;top:550.50px;font-size:11.6px;color:#e4e4e4;transform-origin:0 0;transform:scaleX(0.74);">SM</div><div class="r sf" style="left:467.70px;top:488.20px;width:19.90px;height:62.10px;"></div><div class="r" style="left:502.60px;top:64.60px;width:228.50px;height:239.40px;background:#3d3d3d;box-shadow:inset 0 0 0 1.8px #b0b0b0;border-radius:1.5px"></div><div class="t" style="left:506.40px;top:67.00px;font-size:10.9px;color:#e4e4e4;transform-origin:0 0;transform:scaleX(0.74);">GPC</div><div class="r" style="left:508.60px;top:79.60px;width:215.30px;height:14.20px;background:#1f5a6a;border-radius:1px"></div><div class="t" style="left:416.25px;top:81.00px;width:400px;font-size:11.9px;color:#d6e4e8;text-align:center;transform:scaleX(0.73);">Raster Engine</div><div class="r" style="left:508.30px;top:283.70px;width:106.30px;height:10.10px;background:#383838;box-shadow:inset 0 0 0 1px #525252"></div><div class="r" style="left:511.50px;top:286.20px;width:99.90px;height:4.90px;background:#1f5a6a"></div><div class="r" style="left:617.90px;top:283.70px;width:106.30px;height:10.10px;background:#383838;box-shadow:inset 0 0 0 1px #525252"></div><div class="r" style="left:621.10px;top:286.20px;width:99.90px;height:4.90px;background:#1f5a6a"></div><div class="r" style="left:508.40px;top:98.00px;width:33.10px;height:183.20px;background:#3c3c3c;box-shadow:inset 0 0 0 1px #4e4e4e;border-radius:2px"></div><div class="t" style="left:511.20px;top:99.60px;font-size:12.4px;color:#e4e4e4;transform-origin:0 0;transform:scaleX(0.66);">TPC</div><div class="r" style="left:512.30px;top:117.00px;width:24.90px;height:78.40px;background:#3b3b3b;box-shadow:inset 0 0 0 1px #505050;border-radius:1.5px"></div><div class="t" style="left:514.40px;top:118.00px;font-size:11.6px;color:#e4e4e4;transform-origin:0 0;transform:scaleX(0.74);">SM</div><div class="r s" style="left:514.90px;top:131.90px;width:19.90px;height:62.10px;"></div><div class="r" style="left:512.30px;top:200.00px;width:24.90px;height:78.40px;background:#3b3b3b;box-shadow:inset 0 0 0 1px #505050;border-radius:1.5px"></div><div class="t" style="left:514.40px;top:201.00px;font-size:11.6px;color:#e4e4e4;transform-origin:0 0;transform:scaleX(0.74);">SM</div><div class="r s" style="left:514.90px;top:214.90px;width:19.90px;height:62.10px;"></div><div class="r" style="left:544.88px;top:98.00px;width:33.10px;height:183.20px;background:#3c3c3c;box-shadow:inset 0 0 0 1px #4e4e4e;border-radius:2px"></div><div class="t" style="left:547.68px;top:99.60px;font-size:12.4px;color:#e4e4e4;transform-origin:0 0;transform:scaleX(0.66);">TPC</div><div class="r" style="left:548.78px;top:117.00px;width:24.90px;height:78.40px;background:#3b3b3b;box-shadow:inset 0 0 0 1px #505050;border-radius:1.5px"></div><div class="t" style="left:550.88px;top:118.00px;font-size:11.6px;color:#e4e4e4;transform-origin:0 0;transform:scaleX(0.74);">SM</div><div class="r s" style="left:551.38px;top:131.90px;width:19.90px;height:62.10px;"></div><div class="r" style="left:548.78px;top:200.00px;width:24.90px;height:78.40px;background:#3b3b3b;box-shadow:inset 0 0 0 1px #505050;border-radius:1.5px"></div><div class="t" style="left:550.88px;top:201.00px;font-size:11.6px;color:#e4e4e4;transform-origin:0 0;transform:scaleX(0.74);">SM</div><div class="r s" style="left:551.38px;top:214.90px;width:19.90px;height:62.10px;"></div><div class="r" style="left:581.36px;top:98.00px;width:33.10px;height:183.20px;background:#3c3c3c;box-shadow:inset 0 0 0 1px #4e4e4e;border-radius:2px"></div><div class="t" style="left:584.16px;top:99.60px;font-size:12.4px;color:#e4e4e4;transform-origin:0 0;transform:scaleX(0.66);">TPC</div><div class="r" style="left:585.26px;top:117.00px;width:24.90px;height:78.40px;background:#3b3b3b;box-shadow:inset 0 0 0 1px #505050;border-radius:1.5px"></div><div class="t" style="left:587.36px;top:118.00px;font-size:11.6px;color:#e4e4e4;transform-origin:0 0;transform:scaleX(0.74);">SM</div><div class="r s" style="left:587.86px;top:131.90px;width:19.90px;height:62.10px;"></div><div class="r" style="left:585.26px;top:200.00px;width:24.90px;height:78.40px;background:#3b3b3b;box-shadow:inset 0 0 0 1px #505050;border-radius:1.5px"></div><div class="t" style="left:587.36px;top:201.00px;font-size:11.6px;color:#e4e4e4;transform-origin:0 0;transform:scaleX(0.74);">SM</div><div class="r s" style="left:587.86px;top:214.90px;width:19.90px;height:62.10px;"></div><div class="r" style="left:617.84px;top:98.00px;width:33.10px;height:183.20px;background:#3c3c3c;box-shadow:inset 0 0 0 1px #4e4e4e;border-radius:2px"></div><div class="t" style="left:620.64px;top:99.60px;font-size:12.4px;color:#e4e4e4;transform-origin:0 0;transform:scaleX(0.66);">TPC</div><div class="r" style="left:621.74px;top:117.00px;width:24.90px;height:78.40px;background:#3b3b3b;box-shadow:inset 0 0 0 1px #505050;border-radius:1.5px"></div><div class="t" style="left:623.84px;top:118.00px;font-size:11.6px;color:#e4e4e4;transform-origin:0 0;transform:scaleX(0.74);">SM</div><div class="r s" style="left:624.34px;top:131.90px;width:19.90px;height:62.10px;"></div><div class="r" style="left:621.74px;top:200.00px;width:24.90px;height:78.40px;background:#3b3b3b;box-shadow:inset 0 0 0 1px #505050;border-radius:1.5px"></div><div class="t" style="left:623.84px;top:201.00px;font-size:11.6px;color:#e4e4e4;transform-origin:0 0;transform:scaleX(0.74);">SM</div><div class="r s" style="left:624.34px;top:214.90px;width:19.90px;height:62.10px;"></div><div class="r" style="left:654.32px;top:98.00px;width:33.10px;height:183.20px;background:#3c3c3c;box-shadow:inset 0 0 0 1px #4e4e4e;border-radius:2px"></div><div class="t" style="left:657.12px;top:99.60px;font-size:12.4px;color:#e4e4e4;transform-origin:0 0;transform:scaleX(0.66);">TPC</div><div class="r" style="left:658.22px;top:117.00px;width:24.90px;height:78.40px;background:#3b3b3b;box-shadow:inset 0 0 0 1px #505050;border-radius:1.5px"></div><div class="t" style="left:660.32px;top:118.00px;font-size:11.6px;color:#e4e4e4;transform-origin:0 0;transform:scaleX(0.74);">SM</div><div class="r s" style="left:660.82px;top:131.90px;width:19.90px;height:62.10px;"></div><div class="r" style="left:658.22px;top:200.00px;width:24.90px;height:78.40px;background:#3b3b3b;box-shadow:inset 0 0 0 1px #505050;border-radius:1.5px"></div><div class="t" style="left:660.32px;top:201.00px;font-size:11.6px;color:#e4e4e4;transform-origin:0 0;transform:scaleX(0.74);">SM</div><div class="r s" style="left:660.82px;top:214.90px;width:19.90px;height:62.10px;"></div><div class="r" style="left:690.80px;top:98.00px;width:33.10px;height:183.20px;background:#3c3c3c;box-shadow:inset 0 0 0 1px #4e4e4e;border-radius:2px"></div><div class="t" style="left:693.60px;top:99.60px;font-size:12.4px;color:#e4e4e4;transform-origin:0 0;transform:scaleX(0.66);">TPC</div><div class="r" style="left:694.70px;top:117.00px;width:24.90px;height:78.40px;background:#3b3b3b;box-shadow:inset 0 0 0 1px #505050;border-radius:1.5px"></div><div class="t" style="left:696.80px;top:118.00px;font-size:11.6px;color:#e4e4e4;transform-origin:0 0;transform:scaleX(0.74);">SM</div><div class="r s" style="left:697.30px;top:131.90px;width:19.90px;height:62.10px;"></div><div class="r" style="left:694.70px;top:200.00px;width:24.90px;height:78.40px;background:#3b3b3b;box-shadow:inset 0 0 0 1px #505050;border-radius:1.5px"></div><div class="t" style="left:696.80px;top:201.00px;font-size:11.6px;color:#e4e4e4;transform-origin:0 0;transform:scaleX(0.74);">SM</div><div class="r s" style="left:697.30px;top:214.90px;width:19.90px;height:62.10px;"></div><div class="r" style="left:502.60px;top:466.30px;width:228.50px;height:238.40px;background:#3d3d3d;box-shadow:inset 0 0 0 1.8px #b0b0b0;border-radius:1.5px"></div><div class="t" style="left:506.40px;top:687.00px;font-size:10.9px;color:#e4e4e4;transform-origin:0 0;transform:scaleX(0.74);">GPC</div><div class="r" style="left:508.60px;top:669.80px;width:215.30px;height:14.20px;background:#1f5a6a;border-radius:1px"></div><div class="t" style="left:416.25px;top:671.50px;width:400px;font-size:11.9px;color:#d6e4e8;text-align:center;transform:scaleX(0.73);">Raster Engine</div><div class="r" style="left:508.30px;top:470.60px;width:106.30px;height:10.10px;background:#383838;box-shadow:inset 0 0 0 1px #525252"></div><div class="r" style="left:511.50px;top:473.30px;width:99.90px;height:4.90px;background:#1f5a6a"></div><div class="r" style="left:617.90px;top:470.60px;width:106.30px;height:10.10px;background:#383838;box-shadow:inset 0 0 0 1px #525252"></div><div class="r" style="left:621.10px;top:473.30px;width:99.90px;height:4.90px;background:#1f5a6a"></div><div class="r" style="left:508.40px;top:484.00px;width:33.10px;height:183.20px;background:#3c3c3c;box-shadow:inset 0 0 0 1px #4e4e4e;border-radius:2px"></div><div class="t" style="left:511.20px;top:652.00px;font-size:12.4px;color:#e4e4e4;transform-origin:0 0;transform:scaleX(0.66);">TPC</div><div class="r" style="left:512.30px;top:569.80px;width:24.90px;height:78.40px;background:#3b3b3b;box-shadow:inset 0 0 0 1px #505050;border-radius:1.5px"></div><div class="t" style="left:514.40px;top:633.50px;font-size:11.6px;color:#e4e4e4;transform-origin:0 0;transform:scaleX(0.74);">SM</div><div class="r sf" style="left:514.90px;top:571.20px;width:19.90px;height:62.10px;"></div><div class="r" style="left:512.30px;top:486.80px;width:24.90px;height:78.40px;background:#3b3b3b;box-shadow:inset 0 0 0 1px #505050;border-radius:1.5px"></div><div class="t" style="left:514.40px;top:550.50px;font-size:11.6px;color:#e4e4e4;transform-origin:0 0;transform:scaleX(0.74);">SM</div><div class="r sf" style="left:514.90px;top:488.20px;width:19.90px;height:62.10px;"></div><div class="r" style="left:544.88px;top:484.00px;width:33.10px;height:183.20px;background:#3c3c3c;box-shadow:inset 0 0 0 1px #4e4e4e;border-radius:2px"></div><div class="t" style="left:547.68px;top:652.00px;font-size:12.4px;color:#e4e4e4;transform-origin:0 0;transform:scaleX(0.66);">TPC</div><div class="r" style="left:548.78px;top:569.80px;width:24.90px;height:78.40px;background:#3b3b3b;box-shadow:inset 0 0 0 1px #505050;border-radius:1.5px"></div><div class="t" style="left:550.88px;top:633.50px;font-size:11.6px;color:#e4e4e4;transform-origin:0 0;transform:scaleX(0.74);">SM</div><div class="r sf" style="left:551.38px;top:571.20px;width:19.90px;height:62.10px;"></div><div class="r" style="left:548.78px;top:486.80px;width:24.90px;height:78.40px;background:#3b3b3b;box-shadow:inset 0 0 0 1px #505050;border-radius:1.5px"></div><div class="t" style="left:550.88px;top:550.50px;font-size:11.6px;color:#e4e4e4;transform-origin:0 0;transform:scaleX(0.74);">SM</div><div class="r sf" style="left:551.38px;top:488.20px;width:19.90px;height:62.10px;"></div><div class="r" style="left:581.36px;top:484.00px;width:33.10px;height:183.20px;background:#3c3c3c;box-shadow:inset 0 0 0 1px #4e4e4e;border-radius:2px"></div><div class="t" style="left:584.16px;top:652.00px;font-size:12.4px;color:#e4e4e4;transform-origin:0 0;transform:scaleX(0.66);">TPC</div><div class="r" style="left:585.26px;top:569.80px;width:24.90px;height:78.40px;background:#3b3b3b;box-shadow:inset 0 0 0 1px #505050;border-radius:1.5px"></div><div class="t" style="left:587.36px;top:633.50px;font-size:11.6px;color:#e4e4e4;transform-origin:0 0;transform:scaleX(0.74);">SM</div><div class="r sf" style="left:587.86px;top:571.20px;width:19.90px;height:62.10px;"></div><div class="r" style="left:585.26px;top:486.80px;width:24.90px;height:78.40px;background:#3b3b3b;box-shadow:inset 0 0 0 1px #505050;border-radius:1.5px"></div><div class="t" style="left:587.36px;top:550.50px;font-size:11.6px;color:#e4e4e4;transform-origin:0 0;transform:scaleX(0.74);">SM</div><div class="r sf" style="left:587.86px;top:488.20px;width:19.90px;height:62.10px;"></div><div class="r" style="left:617.84px;top:484.00px;width:33.10px;height:183.20px;background:#3c3c3c;box-shadow:inset 0 0 0 1px #4e4e4e;border-radius:2px"></div><div class="t" style="left:620.64px;top:652.00px;font-size:12.4px;color:#e4e4e4;transform-origin:0 0;transform:scaleX(0.66);">TPC</div><div class="r" style="left:621.74px;top:569.80px;width:24.90px;height:78.40px;background:#3b3b3b;box-shadow:inset 0 0 0 1px #505050;border-radius:1.5px"></div><div class="t" style="left:623.84px;top:633.50px;font-size:11.6px;color:#e4e4e4;transform-origin:0 0;transform:scaleX(0.74);">SM</div><div class="r sf" style="left:624.34px;top:571.20px;width:19.90px;height:62.10px;"></div><div class="r" style="left:621.74px;top:486.80px;width:24.90px;height:78.40px;background:#3b3b3b;box-shadow:inset 0 0 0 1px #505050;border-radius:1.5px"></div><div class="t" style="left:623.84px;top:550.50px;font-size:11.6px;color:#e4e4e4;transform-origin:0 0;transform:scaleX(0.74);">SM</div><div class="r sf" style="left:624.34px;top:488.20px;width:19.90px;height:62.10px;"></div><div class="r" style="left:654.32px;top:484.00px;width:33.10px;height:183.20px;background:#3c3c3c;box-shadow:inset 0 0 0 1px #4e4e4e;border-radius:2px"></div><div class="t" style="left:657.12px;top:652.00px;font-size:12.4px;color:#e4e4e4;transform-origin:0 0;transform:scaleX(0.66);">TPC</div><div class="r" style="left:658.22px;top:569.80px;width:24.90px;height:78.40px;background:#3b3b3b;box-shadow:inset 0 0 0 1px #505050;border-radius:1.5px"></div><div class="t" style="left:660.32px;top:633.50px;font-size:11.6px;color:#e4e4e4;transform-origin:0 0;transform:scaleX(0.74);">SM</div><div class="r sf" style="left:660.82px;top:571.20px;width:19.90px;height:62.10px;"></div><div class="r" style="left:658.22px;top:486.80px;width:24.90px;height:78.40px;background:#3b3b3b;box-shadow:inset 0 0 0 1px #505050;border-radius:1.5px"></div><div class="t" style="left:660.32px;top:550.50px;font-size:11.6px;color:#e4e4e4;transform-origin:0 0;transform:scaleX(0.74);">SM</div><div class="r sf" style="left:660.82px;top:488.20px;width:19.90px;height:62.10px;"></div><div class="r" style="left:690.80px;top:484.00px;width:33.10px;height:183.20px;background:#3c3c3c;box-shadow:inset 0 0 0 1px #4e4e4e;border-radius:2px"></div><div class="t" style="left:693.60px;top:652.00px;font-size:12.4px;color:#e4e4e4;transform-origin:0 0;transform:scaleX(0.66);">TPC</div><div class="r" style="left:694.70px;top:569.80px;width:24.90px;height:78.40px;background:#3b3b3b;box-shadow:inset 0 0 0 1px #505050;border-radius:1.5px"></div><div class="t" style="left:696.80px;top:633.50px;font-size:11.6px;color:#e4e4e4;transform-origin:0 0;transform:scaleX(0.74);">SM</div><div class="r sf" style="left:697.30px;top:571.20px;width:19.90px;height:62.10px;"></div><div class="r" style="left:694.70px;top:486.80px;width:24.90px;height:78.40px;background:#3b3b3b;box-shadow:inset 0 0 0 1px #505050;border-radius:1.5px"></div><div class="t" style="left:696.80px;top:550.50px;font-size:11.6px;color:#e4e4e4;transform-origin:0 0;transform:scaleX(0.74);">SM</div><div class="r sf" style="left:697.30px;top:488.20px;width:19.90px;height:62.10px;"></div><div class="r" style="left:732.20px;top:64.60px;width:228.50px;height:239.40px;background:#3d3d3d;box-shadow:inset 0 0 0 1.8px #b0b0b0;border-radius:1.5px"></div><div class="t" style="left:736.00px;top:67.00px;font-size:10.9px;color:#e4e4e4;transform-origin:0 0;transform:scaleX(0.74);">GPC</div><div class="r" style="left:738.20px;top:79.60px;width:215.30px;height:14.20px;background:#1f5a6a;border-radius:1px"></div><div class="t" style="left:645.85px;top:81.00px;width:400px;font-size:11.9px;color:#d6e4e8;text-align:center;transform:scaleX(0.73);">Raster Engine</div><div class="r" style="left:737.90px;top:283.70px;width:106.30px;height:10.10px;background:#383838;box-shadow:inset 0 0 0 1px #525252"></div><div class="r" style="left:741.10px;top:286.20px;width:99.90px;height:4.90px;background:#1f5a6a"></div><div class="r" style="left:847.50px;top:283.70px;width:106.30px;height:10.10px;background:#383838;box-shadow:inset 0 0 0 1px #525252"></div><div class="r" style="left:850.70px;top:286.20px;width:99.90px;height:4.90px;background:#1f5a6a"></div><div class="r" style="left:738.00px;top:98.00px;width:33.10px;height:183.20px;background:#3c3c3c;box-shadow:inset 0 0 0 1px #4e4e4e;border-radius:2px"></div><div class="t" style="left:740.80px;top:99.60px;font-size:12.4px;color:#e4e4e4;transform-origin:0 0;transform:scaleX(0.66);">TPC</div><div class="r" style="left:741.90px;top:117.00px;width:24.90px;height:78.40px;background:#3b3b3b;box-shadow:inset 0 0 0 1px #505050;border-radius:1.5px"></div><div class="t" style="left:744.00px;top:118.00px;font-size:11.6px;color:#e4e4e4;transform-origin:0 0;transform:scaleX(0.74);">SM</div><div class="r s" style="left:744.50px;top:131.90px;width:19.90px;height:62.10px;"></div><div class="r" style="left:741.90px;top:200.00px;width:24.90px;height:78.40px;background:#3b3b3b;box-shadow:inset 0 0 0 1px #505050;border-radius:1.5px"></div><div class="t" style="left:744.00px;top:201.00px;font-size:11.6px;color:#e4e4e4;transform-origin:0 0;transform:scaleX(0.74);">SM</div><div class="r s" style="left:744.50px;top:214.90px;width:19.90px;height:62.10px;"></div><div class="r" style="left:774.48px;top:98.00px;width:33.10px;height:183.20px;background:#3c3c3c;box-shadow:inset 0 0 0 1px #4e4e4e;border-radius:2px"></div><div class="t" style="left:777.28px;top:99.60px;font-size:12.4px;color:#e4e4e4;transform-origin:0 0;transform:scaleX(0.66);">TPC</div><div class="r" style="left:778.38px;top:117.00px;width:24.90px;height:78.40px;background:#3b3b3b;box-shadow:inset 0 0 0 1px #505050;border-radius:1.5px"></div><div class="t" style="left:780.48px;top:118.00px;font-size:11.6px;color:#e4e4e4;transform-origin:0 0;transform:scaleX(0.74);">SM</div><div class="r s" style="left:780.98px;top:131.90px;width:19.90px;height:62.10px;"></div><div class="r" style="left:778.38px;top:200.00px;width:24.90px;height:78.40px;background:#3b3b3b;box-shadow:inset 0 0 0 1px #505050;border-radius:1.5px"></div><div class="t" style="left:780.48px;top:201.00px;font-size:11.6px;color:#e4e4e4;transform-origin:0 0;transform:scaleX(0.74);">SM</div><div class="r s" style="left:780.98px;top:214.90px;width:19.90px;height:62.10px;"></div><div class="r" style="left:810.96px;top:98.00px;width:33.10px;height:183.20px;background:#3c3c3c;box-shadow:inset 0 0 0 1px #4e4e4e;border-radius:2px"></div><div class="t" style="left:813.76px;top:99.60px;font-size:12.4px;color:#e4e4e4;transform-origin:0 0;transform:scaleX(0.66);">TPC</div><div class="r" style="left:814.86px;top:117.00px;width:24.90px;height:78.40px;background:#3b3b3b;box-shadow:inset 0 0 0 1px #505050;border-radius:1.5px"></div><div class="t" style="left:816.96px;top:118.00px;font-size:11.6px;color:#e4e4e4;transform-origin:0 0;transform:scaleX(0.74);">SM</div><div class="r s" style="left:817.46px;top:131.90px;width:19.90px;height:62.10px;"></div><div class="r" style="left:814.86px;top:200.00px;width:24.90px;height:78.40px;background:#3b3b3b;box-shadow:inset 0 0 0 1px #505050;border-radius:1.5px"></div><div class="t" style="left:816.96px;top:201.00px;font-size:11.6px;color:#e4e4e4;transform-origin:0 0;transform:scaleX(0.74);">SM</div><div class="r s" style="left:817.46px;top:214.90px;width:19.90px;height:62.10px;"></div><div class="r" style="left:847.44px;top:98.00px;width:33.10px;height:183.20px;background:#3c3c3c;box-shadow:inset 0 0 0 1px #4e4e4e;border-radius:2px"></div><div class="t" style="left:850.24px;top:99.60px;font-size:12.4px;color:#e4e4e4;transform-origin:0 0;transform:scaleX(0.66);">TPC</div><div class="r" style="left:851.34px;top:117.00px;width:24.90px;height:78.40px;background:#3b3b3b;box-shadow:inset 0 0 0 1px #505050;border-radius:1.5px"></div><div class="t" style="left:853.44px;top:118.00px;font-size:11.6px;color:#e4e4e4;transform-origin:0 0;transform:scaleX(0.74);">SM</div><div class="r s" style="left:853.94px;top:131.90px;width:19.90px;height:62.10px;"></div><div class="r" style="left:851.34px;top:200.00px;width:24.90px;height:78.40px;background:#3b3b3b;box-shadow:inset 0 0 0 1px #505050;border-radius:1.5px"></div><div class="t" style="left:853.44px;top:201.00px;font-size:11.6px;color:#e4e4e4;transform-origin:0 0;transform:scaleX(0.74);">SM</div><div class="r s" style="left:853.94px;top:214.90px;width:19.90px;height:62.10px;"></div><div class="r" style="left:883.92px;top:98.00px;width:33.10px;height:183.20px;background:#3c3c3c;box-shadow:inset 0 0 0 1px #4e4e4e;border-radius:2px"></div><div class="t" style="left:886.72px;top:99.60px;font-size:12.4px;color:#e4e4e4;transform-origin:0 0;transform:scaleX(0.66);">TPC</div><div class="r" style="left:887.82px;top:117.00px;width:24.90px;height:78.40px;background:#3b3b3b;box-shadow:inset 0 0 0 1px #505050;border-radius:1.5px"></div><div class="t" style="left:889.92px;top:118.00px;font-size:11.6px;color:#e4e4e4;transform-origin:0 0;transform:scaleX(0.74);">SM</div><div class="r s" style="left:890.42px;top:131.90px;width:19.90px;height:62.10px;"></div><div class="r" style="left:887.82px;top:200.00px;width:24.90px;height:78.40px;background:#3b3b3b;box-shadow:inset 0 0 0 1px #505050;border-radius:1.5px"></div><div class="t" style="left:889.92px;top:201.00px;font-size:11.6px;color:#e4e4e4;transform-origin:0 0;transform:scaleX(0.74);">SM</div><div class="r s" style="left:890.42px;top:214.90px;width:19.90px;height:62.10px;"></div><div class="r" style="left:920.40px;top:98.00px;width:33.10px;height:183.20px;background:#3c3c3c;box-shadow:inset 0 0 0 1px #4e4e4e;border-radius:2px"></div><div class="t" style="left:923.20px;top:99.60px;font-size:12.4px;color:#e4e4e4;transform-origin:0 0;transform:scaleX(0.66);">TPC</div><div class="r" style="left:924.30px;top:117.00px;width:24.90px;height:78.40px;background:#3b3b3b;box-shadow:inset 0 0 0 1px #505050;border-radius:1.5px"></div><div class="t" style="left:926.40px;top:118.00px;font-size:11.6px;color:#e4e4e4;transform-origin:0 0;transform:scaleX(0.74);">SM</div><div class="r s" style="left:926.90px;top:131.90px;width:19.90px;height:62.10px;"></div><div class="r" style="left:924.30px;top:200.00px;width:24.90px;height:78.40px;background:#3b3b3b;box-shadow:inset 0 0 0 1px #505050;border-radius:1.5px"></div><div class="t" style="left:926.40px;top:201.00px;font-size:11.6px;color:#e4e4e4;transform-origin:0 0;transform:scaleX(0.74);">SM</div><div class="r s" style="left:926.90px;top:214.90px;width:19.90px;height:62.10px;"></div><div class="r" style="left:732.20px;top:466.30px;width:228.50px;height:238.40px;background:#3d3d3d;box-shadow:inset 0 0 0 1.8px #b0b0b0;border-radius:1.5px"></div><div class="t" style="left:736.00px;top:687.00px;font-size:10.9px;color:#e4e4e4;transform-origin:0 0;transform:scaleX(0.74);">GPC</div><div class="r" style="left:738.20px;top:669.80px;width:215.30px;height:14.20px;background:#1f5a6a;border-radius:1px"></div><div class="t" style="left:645.85px;top:671.50px;width:400px;font-size:11.9px;color:#d6e4e8;text-align:center;transform:scaleX(0.73);">Raster Engine</div><div class="r" style="left:737.90px;top:470.60px;width:106.30px;height:10.10px;background:#383838;box-shadow:inset 0 0 0 1px #525252"></div><div class="r" style="left:741.10px;top:473.30px;width:99.90px;height:4.90px;background:#1f5a6a"></div><div class="r" style="left:847.50px;top:470.60px;width:106.30px;height:10.10px;background:#383838;box-shadow:inset 0 0 0 1px #525252"></div><div class="r" style="left:850.70px;top:473.30px;width:99.90px;height:4.90px;background:#1f5a6a"></div><div class="r" style="left:738.00px;top:484.00px;width:33.10px;height:183.20px;background:#3c3c3c;box-shadow:inset 0 0 0 1px #4e4e4e;border-radius:2px"></div><div class="t" style="left:740.80px;top:652.00px;font-size:12.4px;color:#e4e4e4;transform-origin:0 0;transform:scaleX(0.66);">TPC</div><div class="r" style="left:741.90px;top:569.80px;width:24.90px;height:78.40px;background:#3b3b3b;box-shadow:inset 0 0 0 1px #505050;border-radius:1.5px"></div><div class="t" style="left:744.00px;top:633.50px;font-size:11.6px;color:#e4e4e4;transform-origin:0 0;transform:scaleX(0.74);">SM</div><div class="r sf" style="left:744.50px;top:571.20px;width:19.90px;height:62.10px;"></div><div class="r" style="left:741.90px;top:486.80px;width:24.90px;height:78.40px;background:#3b3b3b;box-shadow:inset 0 0 0 1px #505050;border-radius:1.5px"></div><div class="t" style="left:744.00px;top:550.50px;font-size:11.6px;color:#e4e4e4;transform-origin:0 0;transform:scaleX(0.74);">SM</div><div class="r sf" style="left:744.50px;top:488.20px;width:19.90px;height:62.10px;"></div><div class="r" style="left:774.48px;top:484.00px;width:33.10px;height:183.20px;background:#3c3c3c;box-shadow:inset 0 0 0 1px #4e4e4e;border-radius:2px"></div><div class="t" style="left:777.28px;top:652.00px;font-size:12.4px;color:#e4e4e4;transform-origin:0 0;transform:scaleX(0.66);">TPC</div><div class="r" style="left:778.38px;top:569.80px;width:24.90px;height:78.40px;background:#3b3b3b;box-shadow:inset 0 0 0 1px #505050;border-radius:1.5px"></div><div class="t" style="left:780.48px;top:633.50px;font-size:11.6px;color:#e4e4e4;transform-origin:0 0;transform:scaleX(0.74);">SM</div><div class="r sf" style="left:780.98px;top:571.20px;width:19.90px;height:62.10px;"></div><div class="r" style="left:778.38px;top:486.80px;width:24.90px;height:78.40px;background:#3b3b3b;box-shadow:inset 0 0 0 1px #505050;border-radius:1.5px"></div><div class="t" style="left:780.48px;top:550.50px;font-size:11.6px;color:#e4e4e4;transform-origin:0 0;transform:scaleX(0.74);">SM</div><div class="r sf" style="left:780.98px;top:488.20px;width:19.90px;height:62.10px;"></div><div class="r" style="left:810.96px;top:484.00px;width:33.10px;height:183.20px;background:#3c3c3c;box-shadow:inset 0 0 0 1px #4e4e4e;border-radius:2px"></div><div class="t" style="left:813.76px;top:652.00px;font-size:12.4px;color:#e4e4e4;transform-origin:0 0;transform:scaleX(0.66);">TPC</div><div class="r" style="left:814.86px;top:569.80px;width:24.90px;height:78.40px;background:#3b3b3b;box-shadow:inset 0 0 0 1px #505050;border-radius:1.5px"></div><div class="t" style="left:816.96px;top:633.50px;font-size:11.6px;color:#e4e4e4;transform-origin:0 0;transform:scaleX(0.74);">SM</div><div class="r sf" style="left:817.46px;top:571.20px;width:19.90px;height:62.10px;"></div><div class="r" style="left:814.86px;top:486.80px;width:24.90px;height:78.40px;background:#3b3b3b;box-shadow:inset 0 0 0 1px #505050;border-radius:1.5px"></div><div class="t" style="left:816.96px;top:550.50px;font-size:11.6px;color:#e4e4e4;transform-origin:0 0;transform:scaleX(0.74);">SM</div><div class="r sf" style="left:817.46px;top:488.20px;width:19.90px;height:62.10px;"></div><div class="r" style="left:847.44px;top:484.00px;width:33.10px;height:183.20px;background:#3c3c3c;box-shadow:inset 0 0 0 1px #4e4e4e;border-radius:2px"></div><div class="t" style="left:850.24px;top:652.00px;font-size:12.4px;color:#e4e4e4;transform-origin:0 0;transform:scaleX(0.66);">TPC</div><div class="r" style="left:851.34px;top:569.80px;width:24.90px;height:78.40px;background:#3b3b3b;box-shadow:inset 0 0 0 1px #505050;border-radius:1.5px"></div><div class="t" style="left:853.44px;top:633.50px;font-size:11.6px;color:#e4e4e4;transform-origin:0 0;transform:scaleX(0.74);">SM</div><div class="r sf" style="left:853.94px;top:571.20px;width:19.90px;height:62.10px;"></div><div class="r" style="left:851.34px;top:486.80px;width:24.90px;height:78.40px;background:#3b3b3b;box-shadow:inset 0 0 0 1px #505050;border-radius:1.5px"></div><div class="t" style="left:853.44px;top:550.50px;font-size:11.6px;color:#e4e4e4;transform-origin:0 0;transform:scaleX(0.74);">SM</div><div class="r sf" style="left:853.94px;top:488.20px;width:19.90px;height:62.10px;"></div><div class="r" style="left:883.92px;top:484.00px;width:33.10px;height:183.20px;background:#3c3c3c;box-shadow:inset 0 0 0 1px #4e4e4e;border-radius:2px"></div><div class="t" style="left:886.72px;top:652.00px;font-size:12.4px;color:#e4e4e4;transform-origin:0 0;transform:scaleX(0.66);">TPC</div><div class="r" style="left:887.82px;top:569.80px;width:24.90px;height:78.40px;background:#3b3b3b;box-shadow:inset 0 0 0 1px #505050;border-radius:1.5px"></div><div class="t" style="left:889.92px;top:633.50px;font-size:11.6px;color:#e4e4e4;transform-origin:0 0;transform:scaleX(0.74);">SM</div><div class="r sf" style="left:890.42px;top:571.20px;width:19.90px;height:62.10px;"></div><div class="r" style="left:887.82px;top:486.80px;width:24.90px;height:78.40px;background:#3b3b3b;box-shadow:inset 0 0 0 1px #505050;border-radius:1.5px"></div><div class="t" style="left:889.92px;top:550.50px;font-size:11.6px;color:#e4e4e4;transform-origin:0 0;transform:scaleX(0.74);">SM</div><div class="r sf" style="left:890.42px;top:488.20px;width:19.90px;height:62.10px;"></div><div class="r" style="left:920.40px;top:484.00px;width:33.10px;height:183.20px;background:#3c3c3c;box-shadow:inset 0 0 0 1px #4e4e4e;border-radius:2px"></div><div class="t" style="left:923.20px;top:652.00px;font-size:12.4px;color:#e4e4e4;transform-origin:0 0;transform:scaleX(0.66);">TPC</div><div class="r" style="left:924.30px;top:569.80px;width:24.90px;height:78.40px;background:#3b3b3b;box-shadow:inset 0 0 0 1px #505050;border-radius:1.5px"></div><div class="t" style="left:926.40px;top:633.50px;font-size:11.6px;color:#e4e4e4;transform-origin:0 0;transform:scaleX(0.74);">SM</div><div class="r sf" style="left:926.90px;top:571.20px;width:19.90px;height:62.10px;"></div><div class="r" style="left:924.30px;top:486.80px;width:24.90px;height:78.40px;background:#3b3b3b;box-shadow:inset 0 0 0 1px #505050;border-radius:1.5px"></div><div class="t" style="left:926.40px;top:550.50px;font-size:11.6px;color:#e4e4e4;transform-origin:0 0;transform:scaleX(0.74);">SM</div><div class="r sf" style="left:926.90px;top:488.20px;width:19.90px;height:62.10px;"></div><div class="r" style="left:961.80px;top:64.60px;width:228.50px;height:239.40px;background:#3d3d3d;box-shadow:inset 0 0 0 1.8px #b0b0b0;border-radius:1.5px"></div><div class="t" style="left:965.60px;top:67.00px;font-size:10.9px;color:#e4e4e4;transform-origin:0 0;transform:scaleX(0.74);">GPC</div><div class="r" style="left:967.80px;top:79.60px;width:215.30px;height:14.20px;background:#1f5a6a;border-radius:1px"></div><div class="t" style="left:875.45px;top:81.00px;width:400px;font-size:11.9px;color:#d6e4e8;text-align:center;transform:scaleX(0.73);">Raster Engine</div><div class="r" style="left:967.50px;top:283.70px;width:106.30px;height:10.10px;background:#383838;box-shadow:inset 0 0 0 1px #525252"></div><div class="r" style="left:970.70px;top:286.20px;width:99.90px;height:4.90px;background:#1f5a6a"></div><div class="r" style="left:1077.10px;top:283.70px;width:106.30px;height:10.10px;background:#383838;box-shadow:inset 0 0 0 1px #525252"></div><div class="r" style="left:1080.30px;top:286.20px;width:99.90px;height:4.90px;background:#1f5a6a"></div><div class="r" style="left:967.60px;top:98.00px;width:33.10px;height:183.20px;background:#3c3c3c;box-shadow:inset 0 0 0 1px #4e4e4e;border-radius:2px"></div><div class="t" style="left:970.40px;top:99.60px;font-size:12.4px;color:#e4e4e4;transform-origin:0 0;transform:scaleX(0.66);">TPC</div><div class="r" style="left:971.50px;top:117.00px;width:24.90px;height:78.40px;background:#3b3b3b;box-shadow:inset 0 0 0 1px #505050;border-radius:1.5px"></div><div class="t" style="left:973.60px;top:118.00px;font-size:11.6px;color:#e4e4e4;transform-origin:0 0;transform:scaleX(0.74);">SM</div><div class="r s" style="left:974.10px;top:131.90px;width:19.90px;height:62.10px;"></div><div class="r" style="left:971.50px;top:200.00px;width:24.90px;height:78.40px;background:#3b3b3b;box-shadow:inset 0 0 0 1px #505050;border-radius:1.5px"></div><div class="t" style="left:973.60px;top:201.00px;font-size:11.6px;color:#e4e4e4;transform-origin:0 0;transform:scaleX(0.74);">SM</div><div class="r s" style="left:974.10px;top:214.90px;width:19.90px;height:62.10px;"></div><div class="r" style="left:1004.08px;top:98.00px;width:33.10px;height:183.20px;background:#3c3c3c;box-shadow:inset 0 0 0 1px #4e4e4e;border-radius:2px"></div><div class="t" style="left:1006.88px;top:99.60px;font-size:12.4px;color:#e4e4e4;transform-origin:0 0;transform:scaleX(0.66);">TPC</div><div class="r" style="left:1007.98px;top:117.00px;width:24.90px;height:78.40px;background:#3b3b3b;box-shadow:inset 0 0 0 1px #505050;border-radius:1.5px"></div><div class="t" style="left:1010.08px;top:118.00px;font-size:11.6px;color:#e4e4e4;transform-origin:0 0;transform:scaleX(0.74);">SM</div><div class="r s" style="left:1010.58px;top:131.90px;width:19.90px;height:62.10px;"></div><div class="r" style="left:1007.98px;top:200.00px;width:24.90px;height:78.40px;background:#3b3b3b;box-shadow:inset 0 0 0 1px #505050;border-radius:1.5px"></div><div class="t" style="left:1010.08px;top:201.00px;font-size:11.6px;color:#e4e4e4;transform-origin:0 0;transform:scaleX(0.74);">SM</div><div class="r s" style="left:1010.58px;top:214.90px;width:19.90px;height:62.10px;"></div><div class="r" style="left:1040.56px;top:98.00px;width:33.10px;height:183.20px;background:#3c3c3c;box-shadow:inset 0 0 0 1px #4e4e4e;border-radius:2px"></div><div class="t" style="left:1043.36px;top:99.60px;font-size:12.4px;color:#e4e4e4;transform-origin:0 0;transform:scaleX(0.66);">TPC</div><div class="r" style="left:1044.46px;top:117.00px;width:24.90px;height:78.40px;background:#3b3b3b;box-shadow:inset 0 0 0 1px #505050;border-radius:1.5px"></div><div class="t" style="left:1046.56px;top:118.00px;font-size:11.6px;color:#e4e4e4;transform-origin:0 0;transform:scaleX(0.74);">SM</div><div class="r s" style="left:1047.06px;top:131.90px;width:19.90px;height:62.10px;"></div><div class="r" style="left:1044.46px;top:200.00px;width:24.90px;height:78.40px;background:#3b3b3b;box-shadow:inset 0 0 0 1px #505050;border-radius:1.5px"></div><div class="t" style="left:1046.56px;top:201.00px;font-size:11.6px;color:#e4e4e4;transform-origin:0 0;transform:scaleX(0.74);">SM</div><div class="r s" style="left:1047.06px;top:214.90px;width:19.90px;height:62.10px;"></div><div class="r" style="left:1077.04px;top:98.00px;width:33.10px;height:183.20px;background:#3c3c3c;box-shadow:inset 0 0 0 1px #4e4e4e;border-radius:2px"></div><div class="t" style="left:1079.84px;top:99.60px;font-size:12.4px;color:#e4e4e4;transform-origin:0 0;transform:scaleX(0.66);">TPC</div><div class="r" style="left:1080.94px;top:117.00px;width:24.90px;height:78.40px;background:#3b3b3b;box-shadow:inset 0 0 0 1px #505050;border-radius:1.5px"></div><div class="t" style="left:1083.04px;top:118.00px;font-size:11.6px;color:#e4e4e4;transform-origin:0 0;transform:scaleX(0.74);">SM</div><div class="r s" style="left:1083.54px;top:131.90px;width:19.90px;height:62.10px;"></div><div class="r" style="left:1080.94px;top:200.00px;width:24.90px;height:78.40px;background:#3b3b3b;box-shadow:inset 0 0 0 1px #505050;border-radius:1.5px"></div><div class="t" style="left:1083.04px;top:201.00px;font-size:11.6px;color:#e4e4e4;transform-origin:0 0;transform:scaleX(0.74);">SM</div><div class="r s" style="left:1083.54px;top:214.90px;width:19.90px;height:62.10px;"></div><div class="r" style="left:1113.52px;top:98.00px;width:33.10px;height:183.20px;background:#3c3c3c;box-shadow:inset 0 0 0 1px #4e4e4e;border-radius:2px"></div><div class="t" style="left:1116.32px;top:99.60px;font-size:12.4px;color:#e4e4e4;transform-origin:0 0;transform:scaleX(0.66);">TPC</div><div class="r" style="left:1117.42px;top:117.00px;width:24.90px;height:78.40px;background:#3b3b3b;box-shadow:inset 0 0 0 1px #505050;border-radius:1.5px"></div><div class="t" style="left:1119.52px;top:118.00px;font-size:11.6px;color:#e4e4e4;transform-origin:0 0;transform:scaleX(0.74);">SM</div><div class="r s" style="left:1120.02px;top:131.90px;width:19.90px;height:62.10px;"></div><div class="r" style="left:1117.42px;top:200.00px;width:24.90px;height:78.40px;background:#3b3b3b;box-shadow:inset 0 0 0 1px #505050;border-radius:1.5px"></div><div class="t" style="left:1119.52px;top:201.00px;font-size:11.6px;color:#e4e4e4;transform-origin:0 0;transform:scaleX(0.74);">SM</div><div class="r s" style="left:1120.02px;top:214.90px;width:19.90px;height:62.10px;"></div><div class="r" style="left:1150.00px;top:98.00px;width:33.10px;height:183.20px;background:#3c3c3c;box-shadow:inset 0 0 0 1px #4e4e4e;border-radius:2px"></div><div class="t" style="left:1152.80px;top:99.60px;font-size:12.4px;color:#e4e4e4;transform-origin:0 0;transform:scaleX(0.66);">TPC</div><div class="r" style="left:1153.90px;top:117.00px;width:24.90px;height:78.40px;background:#3b3b3b;box-shadow:inset 0 0 0 1px #505050;border-radius:1.5px"></div><div class="t" style="left:1156.00px;top:118.00px;font-size:11.6px;color:#e4e4e4;transform-origin:0 0;transform:scaleX(0.74);">SM</div><div class="r s" style="left:1156.50px;top:131.90px;width:19.90px;height:62.10px;"></div><div class="r" style="left:1153.90px;top:200.00px;width:24.90px;height:78.40px;background:#3b3b3b;box-shadow:inset 0 0 0 1px #505050;border-radius:1.5px"></div><div class="t" style="left:1156.00px;top:201.00px;font-size:11.6px;color:#e4e4e4;transform-origin:0 0;transform:scaleX(0.74);">SM</div><div class="r s" style="left:1156.50px;top:214.90px;width:19.90px;height:62.10px;"></div><div class="r" style="left:961.80px;top:466.30px;width:228.50px;height:238.40px;background:#3d3d3d;box-shadow:inset 0 0 0 1.8px #b0b0b0;border-radius:1.5px"></div><div class="t" style="left:965.60px;top:687.00px;font-size:10.9px;color:#e4e4e4;transform-origin:0 0;transform:scaleX(0.74);">GPC</div><div class="r" style="left:967.80px;top:669.80px;width:215.30px;height:14.20px;background:#1f5a6a;border-radius:1px"></div><div class="t" style="left:875.45px;top:671.50px;width:400px;font-size:11.9px;color:#d6e4e8;text-align:center;transform:scaleX(0.73);">Raster Engine</div><div class="r" style="left:967.50px;top:470.60px;width:106.30px;height:10.10px;background:#383838;box-shadow:inset 0 0 0 1px #525252"></div><div class="r" style="left:970.70px;top:473.30px;width:99.90px;height:4.90px;background:#1f5a6a"></div><div class="r" style="left:1077.10px;top:470.60px;width:106.30px;height:10.10px;background:#383838;box-shadow:inset 0 0 0 1px #525252"></div><div class="r" style="left:1080.30px;top:473.30px;width:99.90px;height:4.90px;background:#1f5a6a"></div><div class="r" style="left:967.60px;top:484.00px;width:33.10px;height:183.20px;background:#3c3c3c;box-shadow:inset 0 0 0 1px #4e4e4e;border-radius:2px"></div><div class="t" style="left:970.40px;top:652.00px;font-size:12.4px;color:#e4e4e4;transform-origin:0 0;transform:scaleX(0.66);">TPC</div><div class="r" style="left:971.50px;top:569.80px;width:24.90px;height:78.40px;background:#3b3b3b;box-shadow:inset 0 0 0 1px #505050;border-radius:1.5px"></div><div class="t" style="left:973.60px;top:633.50px;font-size:11.6px;color:#e4e4e4;transform-origin:0 0;transform:scaleX(0.74);">SM</div><div class="r sf" style="left:974.10px;top:571.20px;width:19.90px;height:62.10px;"></div><div class="r" style="left:971.50px;top:486.80px;width:24.90px;height:78.40px;background:#3b3b3b;box-shadow:inset 0 0 0 1px #505050;border-radius:1.5px"></div><div class="t" style="left:973.60px;top:550.50px;font-size:11.6px;color:#e4e4e4;transform-origin:0 0;transform:scaleX(0.74);">SM</div><div class="r sf" style="left:974.10px;top:488.20px;width:19.90px;height:62.10px;"></div><div class="r" style="left:1004.08px;top:484.00px;width:33.10px;height:183.20px;background:#3c3c3c;box-shadow:inset 0 0 0 1px #4e4e4e;border-radius:2px"></div><div class="t" style="left:1006.88px;top:652.00px;font-size:12.4px;color:#e4e4e4;transform-origin:0 0;transform:scaleX(0.66);">TPC</div><div class="r" style="left:1007.98px;top:569.80px;width:24.90px;height:78.40px;background:#3b3b3b;box-shadow:inset 0 0 0 1px #505050;border-radius:1.5px"></div><div class="t" style="left:1010.08px;top:633.50px;font-size:11.6px;color:#e4e4e4;transform-origin:0 0;transform:scaleX(0.74);">SM</div><div class="r sf" style="left:1010.58px;top:571.20px;width:19.90px;height:62.10px;"></div><div class="r" style="left:1007.98px;top:486.80px;width:24.90px;height:78.40px;background:#3b3b3b;box-shadow:inset 0 0 0 1px #505050;border-radius:1.5px"></div><div class="t" style="left:1010.08px;top:550.50px;font-size:11.6px;color:#e4e4e4;transform-origin:0 0;transform:scaleX(0.74);">SM</div><div class="r sf" style="left:1010.58px;top:488.20px;width:19.90px;height:62.10px;"></div><div class="r" style="left:1040.56px;top:484.00px;width:33.10px;height:183.20px;background:#3c3c3c;box-shadow:inset 0 0 0 1px #4e4e4e;border-radius:2px"></div><div class="t" style="left:1043.36px;top:652.00px;font-size:12.4px;color:#e4e4e4;transform-origin:0 0;transform:scaleX(0.66);">TPC</div><div class="r" style="left:1044.46px;top:569.80px;width:24.90px;height:78.40px;background:#3b3b3b;box-shadow:inset 0 0 0 1px #505050;border-radius:1.5px"></div><div class="t" style="left:1046.56px;top:633.50px;font-size:11.6px;color:#e4e4e4;transform-origin:0 0;transform:scaleX(0.74);">SM</div><div class="r sf" style="left:1047.06px;top:571.20px;width:19.90px;height:62.10px;"></div><div class="r" style="left:1044.46px;top:486.80px;width:24.90px;height:78.40px;background:#3b3b3b;box-shadow:inset 0 0 0 1px #505050;border-radius:1.5px"></div><div class="t" style="left:1046.56px;top:550.50px;font-size:11.6px;color:#e4e4e4;transform-origin:0 0;transform:scaleX(0.74);">SM</div><div class="r sf" style="left:1047.06px;top:488.20px;width:19.90px;height:62.10px;"></div><div class="r" style="left:1077.04px;top:484.00px;width:33.10px;height:183.20px;background:#3c3c3c;box-shadow:inset 0 0 0 1px #4e4e4e;border-radius:2px"></div><div class="t" style="left:1079.84px;top:652.00px;font-size:12.4px;color:#e4e4e4;transform-origin:0 0;transform:scaleX(0.66);">TPC</div><div class="r" style="left:1080.94px;top:569.80px;width:24.90px;height:78.40px;background:#3b3b3b;box-shadow:inset 0 0 0 1px #505050;border-radius:1.5px"></div><div class="t" style="left:1083.04px;top:633.50px;font-size:11.6px;color:#e4e4e4;transform-origin:0 0;transform:scaleX(0.74);">SM</div><div class="r sf" style="left:1083.54px;top:571.20px;width:19.90px;height:62.10px;"></div><div class="r" style="left:1080.94px;top:486.80px;width:24.90px;height:78.40px;background:#3b3b3b;box-shadow:inset 0 0 0 1px #505050;border-radius:1.5px"></div><div class="t" style="left:1083.04px;top:550.50px;font-size:11.6px;color:#e4e4e4;transform-origin:0 0;transform:scaleX(0.74);">SM</div><div class="r sf" style="left:1083.54px;top:488.20px;width:19.90px;height:62.10px;"></div><div class="r" style="left:1113.52px;top:484.00px;width:33.10px;height:183.20px;background:#3c3c3c;box-shadow:inset 0 0 0 1px #4e4e4e;border-radius:2px"></div><div class="t" style="left:1116.32px;top:652.00px;font-size:12.4px;color:#e4e4e4;transform-origin:0 0;transform:scaleX(0.66);">TPC</div><div class="r" style="left:1117.42px;top:569.80px;width:24.90px;height:78.40px;background:#3b3b3b;box-shadow:inset 0 0 0 1px #505050;border-radius:1.5px"></div><div class="t" style="left:1119.52px;top:633.50px;font-size:11.6px;color:#e4e4e4;transform-origin:0 0;transform:scaleX(0.74);">SM</div><div class="r sf" style="left:1120.02px;top:571.20px;width:19.90px;height:62.10px;"></div><div class="r" style="left:1117.42px;top:486.80px;width:24.90px;height:78.40px;background:#3b3b3b;box-shadow:inset 0 0 0 1px #505050;border-radius:1.5px"></div><div class="t" style="left:1119.52px;top:550.50px;font-size:11.6px;color:#e4e4e4;transform-origin:0 0;transform:scaleX(0.74);">SM</div><div class="r sf" style="left:1120.02px;top:488.20px;width:19.90px;height:62.10px;"></div><div class="r" style="left:1150.00px;top:484.00px;width:33.10px;height:183.20px;background:#3c3c3c;box-shadow:inset 0 0 0 1px #4e4e4e;border-radius:2px"></div><div class="t" style="left:1152.80px;top:652.00px;font-size:12.4px;color:#e4e4e4;transform-origin:0 0;transform:scaleX(0.66);">TPC</div><div class="r" style="left:1153.90px;top:569.80px;width:24.90px;height:78.40px;background:#3b3b3b;box-shadow:inset 0 0 0 1px #505050;border-radius:1.5px"></div><div class="t" style="left:1156.00px;top:633.50px;font-size:11.6px;color:#e4e4e4;transform-origin:0 0;transform:scaleX(0.74);">SM</div><div class="r sf" style="left:1156.50px;top:571.20px;width:19.90px;height:62.10px;"></div><div class="r" style="left:1153.90px;top:486.80px;width:24.90px;height:78.40px;background:#3b3b3b;box-shadow:inset 0 0 0 1px #505050;border-radius:1.5px"></div><div class="t" style="left:1156.00px;top:550.50px;font-size:11.6px;color:#e4e4e4;transform-origin:0 0;transform:scaleX(0.74);">SM</div><div class="r sf" style="left:1156.50px;top:488.20px;width:19.90px;height:62.10px;"></div><div class="r" style="left:1191.40px;top:64.60px;width:228.50px;height:239.40px;background:#3d3d3d;box-shadow:inset 0 0 0 1.8px #b0b0b0;border-radius:1.5px"></div><div class="t" style="left:1195.20px;top:67.00px;font-size:10.9px;color:#e4e4e4;transform-origin:0 0;transform:scaleX(0.74);">GPC</div><div class="r" style="left:1197.40px;top:79.60px;width:215.30px;height:14.20px;background:#1f5a6a;border-radius:1px"></div><div class="t" style="left:1105.05px;top:81.00px;width:400px;font-size:11.9px;color:#d6e4e8;text-align:center;transform:scaleX(0.73);">Raster Engine</div><div class="r" style="left:1197.10px;top:283.70px;width:106.30px;height:10.10px;background:#383838;box-shadow:inset 0 0 0 1px #525252"></div><div class="r" style="left:1200.30px;top:286.20px;width:99.90px;height:4.90px;background:#1f5a6a"></div><div class="r" style="left:1306.70px;top:283.70px;width:106.30px;height:10.10px;background:#383838;box-shadow:inset 0 0 0 1px #525252"></div><div class="r" style="left:1309.90px;top:286.20px;width:99.90px;height:4.90px;background:#1f5a6a"></div><div class="r" style="left:1197.20px;top:98.00px;width:33.10px;height:183.20px;background:#3c3c3c;box-shadow:inset 0 0 0 1px #4e4e4e;border-radius:2px"></div><div class="t" style="left:1200.00px;top:99.60px;font-size:12.4px;color:#e4e4e4;transform-origin:0 0;transform:scaleX(0.66);">TPC</div><div class="r" style="left:1201.10px;top:117.00px;width:24.90px;height:78.40px;background:#3b3b3b;box-shadow:inset 0 0 0 1px #505050;border-radius:1.5px"></div><div class="t" style="left:1203.20px;top:118.00px;font-size:11.6px;color:#e4e4e4;transform-origin:0 0;transform:scaleX(0.74);">SM</div><div class="r s" style="left:1203.70px;top:131.90px;width:19.90px;height:62.10px;"></div><div class="r" style="left:1201.10px;top:200.00px;width:24.90px;height:78.40px;background:#3b3b3b;box-shadow:inset 0 0 0 1px #505050;border-radius:1.5px"></div><div class="t" style="left:1203.20px;top:201.00px;font-size:11.6px;color:#e4e4e4;transform-origin:0 0;transform:scaleX(0.74);">SM</div><div class="r s" style="left:1203.70px;top:214.90px;width:19.90px;height:62.10px;"></div><div class="r" style="left:1233.68px;top:98.00px;width:33.10px;height:183.20px;background:#3c3c3c;box-shadow:inset 0 0 0 1px #4e4e4e;border-radius:2px"></div><div class="t" style="left:1236.48px;top:99.60px;font-size:12.4px;color:#e4e4e4;transform-origin:0 0;transform:scaleX(0.66);">TPC</div><div class="r" style="left:1237.58px;top:117.00px;width:24.90px;height:78.40px;background:#3b3b3b;box-shadow:inset 0 0 0 1px #505050;border-radius:1.5px"></div><div class="t" style="left:1239.68px;top:118.00px;font-size:11.6px;color:#e4e4e4;transform-origin:0 0;transform:scaleX(0.74);">SM</div><div class="r s" style="left:1240.18px;top:131.90px;width:19.90px;height:62.10px;"></div><div class="r" style="left:1237.58px;top:200.00px;width:24.90px;height:78.40px;background:#3b3b3b;box-shadow:inset 0 0 0 1px #505050;border-radius:1.5px"></div><div class="t" style="left:1239.68px;top:201.00px;font-size:11.6px;color:#e4e4e4;transform-origin:0 0;transform:scaleX(0.74);">SM</div><div class="r s" style="left:1240.18px;top:214.90px;width:19.90px;height:62.10px;"></div><div class="r" style="left:1270.16px;top:98.00px;width:33.10px;height:183.20px;background:#3c3c3c;box-shadow:inset 0 0 0 1px #4e4e4e;border-radius:2px"></div><div class="t" style="left:1272.96px;top:99.60px;font-size:12.4px;color:#e4e4e4;transform-origin:0 0;transform:scaleX(0.66);">TPC</div><div class="r" style="left:1274.06px;top:117.00px;width:24.90px;height:78.40px;background:#3b3b3b;box-shadow:inset 0 0 0 1px #505050;border-radius:1.5px"></div><div class="t" style="left:1276.16px;top:118.00px;font-size:11.6px;color:#e4e4e4;transform-origin:0 0;transform:scaleX(0.74);">SM</div><div class="r s" style="left:1276.66px;top:131.90px;width:19.90px;height:62.10px;"></div><div class="r" style="left:1274.06px;top:200.00px;width:24.90px;height:78.40px;background:#3b3b3b;box-shadow:inset 0 0 0 1px #505050;border-radius:1.5px"></div><div class="t" style="left:1276.16px;top:201.00px;font-size:11.6px;color:#e4e4e4;transform-origin:0 0;transform:scaleX(0.74);">SM</div><div class="r s" style="left:1276.66px;top:214.90px;width:19.90px;height:62.10px;"></div><div class="r" style="left:1306.64px;top:98.00px;width:33.10px;height:183.20px;background:#3c3c3c;box-shadow:inset 0 0 0 1px #4e4e4e;border-radius:2px"></div><div class="t" style="left:1309.44px;top:99.60px;font-size:12.4px;color:#e4e4e4;transform-origin:0 0;transform:scaleX(0.66);">TPC</div><div class="r" style="left:1310.54px;top:117.00px;width:24.90px;height:78.40px;background:#3b3b3b;box-shadow:inset 0 0 0 1px #505050;border-radius:1.5px"></div><div class="t" style="left:1312.64px;top:118.00px;font-size:11.6px;color:#e4e4e4;transform-origin:0 0;transform:scaleX(0.74);">SM</div><div class="r s" style="left:1313.14px;top:131.90px;width:19.90px;height:62.10px;"></div><div class="r" style="left:1310.54px;top:200.00px;width:24.90px;height:78.40px;background:#3b3b3b;box-shadow:inset 0 0 0 1px #505050;border-radius:1.5px"></div><div class="t" style="left:1312.64px;top:201.00px;font-size:11.6px;color:#e4e4e4;transform-origin:0 0;transform:scaleX(0.74);">SM</div><div class="r s" style="left:1313.14px;top:214.90px;width:19.90px;height:62.10px;"></div><div class="r" style="left:1343.12px;top:98.00px;width:33.10px;height:183.20px;background:#3c3c3c;box-shadow:inset 0 0 0 1px #4e4e4e;border-radius:2px"></div><div class="t" style="left:1345.92px;top:99.60px;font-size:12.4px;color:#e4e4e4;transform-origin:0 0;transform:scaleX(0.66);">TPC</div><div class="r" style="left:1347.02px;top:117.00px;width:24.90px;height:78.40px;background:#3b3b3b;box-shadow:inset 0 0 0 1px #505050;border-radius:1.5px"></div><div class="t" style="left:1349.12px;top:118.00px;font-size:11.6px;color:#e4e4e4;transform-origin:0 0;transform:scaleX(0.74);">SM</div><div class="r s" style="left:1349.62px;top:131.90px;width:19.90px;height:62.10px;"></div><div class="r" style="left:1347.02px;top:200.00px;width:24.90px;height:78.40px;background:#3b3b3b;box-shadow:inset 0 0 0 1px #505050;border-radius:1.5px"></div><div class="t" style="left:1349.12px;top:201.00px;font-size:11.6px;color:#e4e4e4;transform-origin:0 0;transform:scaleX(0.74);">SM</div><div class="r s" style="left:1349.62px;top:214.90px;width:19.90px;height:62.10px;"></div><div class="r" style="left:1379.60px;top:98.00px;width:33.10px;height:183.20px;background:#3c3c3c;box-shadow:inset 0 0 0 1px #4e4e4e;border-radius:2px"></div><div class="t" style="left:1382.40px;top:99.60px;font-size:12.4px;color:#e4e4e4;transform-origin:0 0;transform:scaleX(0.66);">TPC</div><div class="r" style="left:1383.50px;top:117.00px;width:24.90px;height:78.40px;background:#3b3b3b;box-shadow:inset 0 0 0 1px #505050;border-radius:1.5px"></div><div class="t" style="left:1385.60px;top:118.00px;font-size:11.6px;color:#e4e4e4;transform-origin:0 0;transform:scaleX(0.74);">SM</div><div class="r s" style="left:1386.10px;top:131.90px;width:19.90px;height:62.10px;"></div><div class="r" style="left:1383.50px;top:200.00px;width:24.90px;height:78.40px;background:#3b3b3b;box-shadow:inset 0 0 0 1px #505050;border-radius:1.5px"></div><div class="t" style="left:1385.60px;top:201.00px;font-size:11.6px;color:#e4e4e4;transform-origin:0 0;transform:scaleX(0.74);">SM</div><div class="r s" style="left:1386.10px;top:214.90px;width:19.90px;height:62.10px;"></div><div class="r" style="left:1191.40px;top:466.30px;width:228.50px;height:238.40px;background:#3d3d3d;box-shadow:inset 0 0 0 1.8px #b0b0b0;border-radius:1.5px"></div><div class="t" style="left:1195.20px;top:687.00px;font-size:10.9px;color:#e4e4e4;transform-origin:0 0;transform:scaleX(0.74);">GPC</div><div class="r" style="left:1197.40px;top:669.80px;width:215.30px;height:14.20px;background:#1f5a6a;border-radius:1px"></div><div class="t" style="left:1105.05px;top:671.50px;width:400px;font-size:11.9px;color:#d6e4e8;text-align:center;transform:scaleX(0.73);">Raster Engine</div><div class="r" style="left:1197.10px;top:470.60px;width:106.30px;height:10.10px;background:#383838;box-shadow:inset 0 0 0 1px #525252"></div><div class="r" style="left:1200.30px;top:473.30px;width:99.90px;height:4.90px;background:#1f5a6a"></div><div class="r" style="left:1306.70px;top:470.60px;width:106.30px;height:10.10px;background:#383838;box-shadow:inset 0 0 0 1px #525252"></div><div class="r" style="left:1309.90px;top:473.30px;width:99.90px;height:4.90px;background:#1f5a6a"></div><div class="r" style="left:1197.20px;top:484.00px;width:33.10px;height:183.20px;background:#3c3c3c;box-shadow:inset 0 0 0 1px #4e4e4e;border-radius:2px"></div><div class="t" style="left:1200.00px;top:652.00px;font-size:12.4px;color:#e4e4e4;transform-origin:0 0;transform:scaleX(0.66);">TPC</div><div class="r" style="left:1201.10px;top:569.80px;width:24.90px;height:78.40px;background:#3b3b3b;box-shadow:inset 0 0 0 1px #505050;border-radius:1.5px"></div><div class="t" style="left:1203.20px;top:633.50px;font-size:11.6px;color:#e4e4e4;transform-origin:0 0;transform:scaleX(0.74);">SM</div><div class="r sf" style="left:1203.70px;top:571.20px;width:19.90px;height:62.10px;"></div><div class="r" style="left:1201.10px;top:486.80px;width:24.90px;height:78.40px;background:#3b3b3b;box-shadow:inset 0 0 0 1px #505050;border-radius:1.5px"></div><div class="t" style="left:1203.20px;top:550.50px;font-size:11.6px;color:#e4e4e4;transform-origin:0 0;transform:scaleX(0.74);">SM</div><div class="r sf" style="left:1203.70px;top:488.20px;width:19.90px;height:62.10px;"></div><div class="r" style="left:1233.68px;top:484.00px;width:33.10px;height:183.20px;background:#3c3c3c;box-shadow:inset 0 0 0 1px #4e4e4e;border-radius:2px"></div><div class="t" style="left:1236.48px;top:652.00px;font-size:12.4px;color:#e4e4e4;transform-origin:0 0;transform:scaleX(0.66);">TPC</div><div class="r" style="left:1237.58px;top:569.80px;width:24.90px;height:78.40px;background:#3b3b3b;box-shadow:inset 0 0 0 1px #505050;border-radius:1.5px"></div><div class="t" style="left:1239.68px;top:633.50px;font-size:11.6px;color:#e4e4e4;transform-origin:0 0;transform:scaleX(0.74);">SM</div><div class="r sf" style="left:1240.18px;top:571.20px;width:19.90px;height:62.10px;"></div><div class="r" style="left:1237.58px;top:486.80px;width:24.90px;height:78.40px;background:#3b3b3b;box-shadow:inset 0 0 0 1px #505050;border-radius:1.5px"></div><div class="t" style="left:1239.68px;top:550.50px;font-size:11.6px;color:#e4e4e4;transform-origin:0 0;transform:scaleX(0.74);">SM</div><div class="r sf" style="left:1240.18px;top:488.20px;width:19.90px;height:62.10px;"></div><div class="r" style="left:1270.16px;top:484.00px;width:33.10px;height:183.20px;background:#3c3c3c;box-shadow:inset 0 0 0 1px #4e4e4e;border-radius:2px"></div><div class="t" style="left:1272.96px;top:652.00px;font-size:12.4px;color:#e4e4e4;transform-origin:0 0;transform:scaleX(0.66);">TPC</div><div class="r" style="left:1274.06px;top:569.80px;width:24.90px;height:78.40px;background:#3b3b3b;box-shadow:inset 0 0 0 1px #505050;border-radius:1.5px"></div><div class="t" style="left:1276.16px;top:633.50px;font-size:11.6px;color:#e4e4e4;transform-origin:0 0;transform:scaleX(0.74);">SM</div><div class="r sf" style="left:1276.66px;top:571.20px;width:19.90px;height:62.10px;"></div><div class="r" style="left:1274.06px;top:486.80px;width:24.90px;height:78.40px;background:#3b3b3b;box-shadow:inset 0 0 0 1px #505050;border-radius:1.5px"></div><div class="t" style="left:1276.16px;top:550.50px;font-size:11.6px;color:#e4e4e4;transform-origin:0 0;transform:scaleX(0.74);">SM</div><div class="r sf" style="left:1276.66px;top:488.20px;width:19.90px;height:62.10px;"></div><div class="r" style="left:1306.64px;top:484.00px;width:33.10px;height:183.20px;background:#3c3c3c;box-shadow:inset 0 0 0 1px #4e4e4e;border-radius:2px"></div><div class="t" style="left:1309.44px;top:652.00px;font-size:12.4px;color:#e4e4e4;transform-origin:0 0;transform:scaleX(0.66);">TPC</div><div class="r" style="left:1310.54px;top:569.80px;width:24.90px;height:78.40px;background:#3b3b3b;box-shadow:inset 0 0 0 1px #505050;border-radius:1.5px"></div><div class="t" style="left:1312.64px;top:633.50px;font-size:11.6px;color:#e4e4e4;transform-origin:0 0;transform:scaleX(0.74);">SM</div><div class="r sf" style="left:1313.14px;top:571.20px;width:19.90px;height:62.10px;"></div><div class="r" style="left:1310.54px;top:486.80px;width:24.90px;height:78.40px;background:#3b3b3b;box-shadow:inset 0 0 0 1px #505050;border-radius:1.5px"></div><div class="t" style="left:1312.64px;top:550.50px;font-size:11.6px;color:#e4e4e4;transform-origin:0 0;transform:scaleX(0.74);">SM</div><div class="r sf" style="left:1313.14px;top:488.20px;width:19.90px;height:62.10px;"></div><div class="r" style="left:1343.12px;top:484.00px;width:33.10px;height:183.20px;background:#3c3c3c;box-shadow:inset 0 0 0 1px #4e4e4e;border-radius:2px"></div><div class="t" style="left:1345.92px;top:652.00px;font-size:12.4px;color:#e4e4e4;transform-origin:0 0;transform:scaleX(0.66);">TPC</div><div class="r" style="left:1347.02px;top:569.80px;width:24.90px;height:78.40px;background:#3b3b3b;box-shadow:inset 0 0 0 1px #505050;border-radius:1.5px"></div><div class="t" style="left:1349.12px;top:633.50px;font-size:11.6px;color:#e4e4e4;transform-origin:0 0;transform:scaleX(0.74);">SM</div><div class="r sf" style="left:1349.62px;top:571.20px;width:19.90px;height:62.10px;"></div><div class="r" style="left:1347.02px;top:486.80px;width:24.90px;height:78.40px;background:#3b3b3b;box-shadow:inset 0 0 0 1px #505050;border-radius:1.5px"></div><div class="t" style="left:1349.12px;top:550.50px;font-size:11.6px;color:#e4e4e4;transform-origin:0 0;transform:scaleX(0.74);">SM</div><div class="r sf" style="left:1349.62px;top:488.20px;width:19.90px;height:62.10px;"></div><div class="r" style="left:1379.60px;top:484.00px;width:33.10px;height:183.20px;background:#3c3c3c;box-shadow:inset 0 0 0 1px #4e4e4e;border-radius:2px"></div><div class="t" style="left:1382.40px;top:652.00px;font-size:12.4px;color:#e4e4e4;transform-origin:0 0;transform:scaleX(0.66);">TPC</div><div class="r" style="left:1383.50px;top:569.80px;width:24.90px;height:78.40px;background:#3b3b3b;box-shadow:inset 0 0 0 1px #505050;border-radius:1.5px"></div><div class="t" style="left:1385.60px;top:633.50px;font-size:11.6px;color:#e4e4e4;transform-origin:0 0;transform:scaleX(0.74);">SM</div><div class="r sf" style="left:1386.10px;top:571.20px;width:19.90px;height:62.10px;"></div><div class="r" style="left:1383.50px;top:486.80px;width:24.90px;height:78.40px;background:#3b3b3b;box-shadow:inset 0 0 0 1px #505050;border-radius:1.5px"></div><div class="t" style="left:1385.60px;top:550.50px;font-size:11.6px;color:#e4e4e4;transform-origin:0 0;transform:scaleX(0.74);">SM</div><div class="r sf" style="left:1386.10px;top:488.20px;width:19.90px;height:62.10px;"></div></div></body></html>
